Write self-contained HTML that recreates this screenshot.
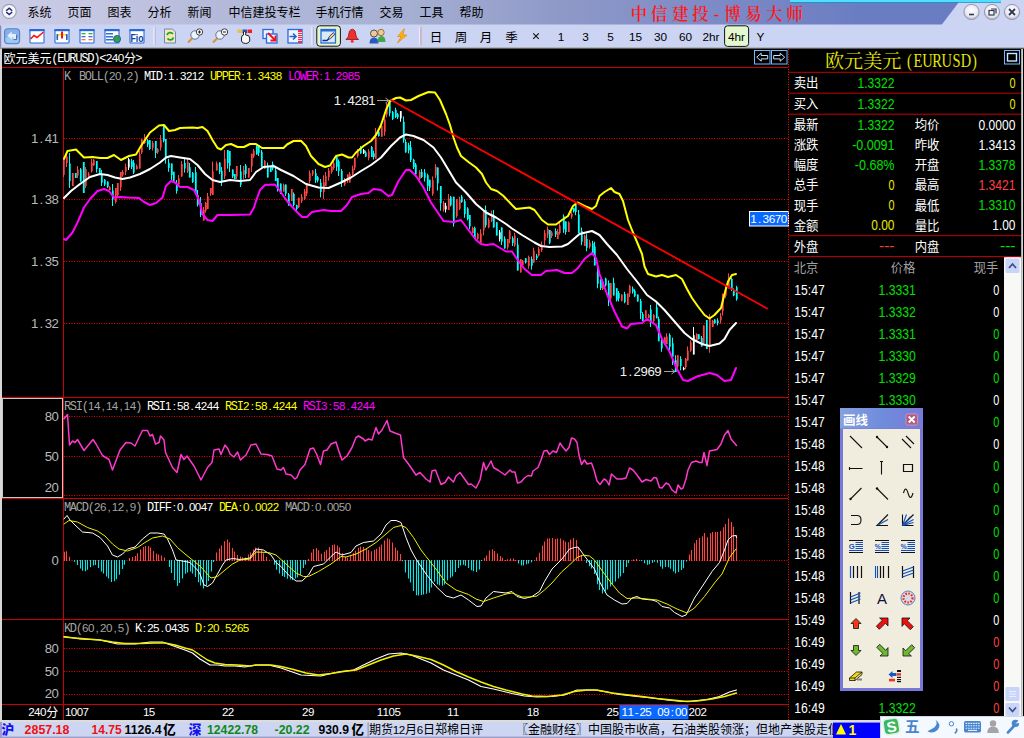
<!DOCTYPE html>
<html lang="zh-CN">
<head>
<meta charset="utf-8">
<title>中信建投-博易大师</title>
<style>
html,body{margin:0;padding:0;background:#000;overflow:hidden}
body{width:1024px;height:738px;font-family:"Liberation Sans","Noto Sans CJK SC",sans-serif}
svg{display:block}
text{white-space:pre}
</style>
</head>
<body>
<svg width="1024" height="738" viewBox="0 0 1024 738">
<defs>
<linearGradient id="gmenu" gradientUnits="userSpaceOnUse" x1="0" x2="1024" y1="0" y2="0"><stop offset="0" stop-color="#cccce6"/><stop offset="0.1" stop-color="#c4c6e2"/><stop offset="0.207" stop-color="#b5bada"/><stop offset="0.395" stop-color="#a6b0d2"/><stop offset="0.547" stop-color="#8f99c8"/><stop offset="0.7" stop-color="#7c8ac6"/><stop offset="0.84" stop-color="#6b7dc2"/><stop offset="1" stop-color="#6b7dc2"/></linearGradient>
<linearGradient id="gpal" x1="0" x2="1" y1="0" y2="0"><stop offset="0" stop-color="#86a0e0"/><stop offset="0.5" stop-color="#6f8cdc"/><stop offset="1" stop-color="#7a7ad8"/></linearGradient>
<radialGradient id="gbtn" cx="0.5" cy="0.4" r="0.6"><stop offset="0" stop-color="#ffffff"/><stop offset="0.7" stop-color="#e8e8f4"/><stop offset="1" stop-color="#a8a8b8"/></radialGradient>
</defs>
<rect x="0" y="0" width="1024" height="738" fill="#000" />
<g id="menubar">
<rect x="0" y="0" width="1024" height="25" fill="url(#gmenu)" />
<polygon points="960.5,0 1024,0 1024,25 941.5,25" fill="#ccd4f4"/>
<rect x="790" y="0" width="211" height="2" fill="#4fe0ff" />
<rect x="790" y="2" width="211" height="0.8" fill="#1890c8" />
<circle cx="9.2" cy="11.4" r="7" fill="#f6f6fc" stroke="#98a0b0" stroke-width="1.1"/>
<path d="M6.2 10.8 L9.2 8.2 L12.2 10.8 M6.2 12 L9.2 14.6 L12.2 12" fill="none" stroke="#202878" stroke-width="1.5"/>
<text x="27.5" y="17.2" font-family='"Liberation Sans","Noto Sans CJK SC",sans-serif' font-size="12.5" fill="#000" textLength="24" lengthAdjust="spacingAndGlyphs">系统</text>
<text x="67.5" y="17.2" font-family='"Liberation Sans","Noto Sans CJK SC",sans-serif' font-size="12.5" fill="#000" textLength="24" lengthAdjust="spacingAndGlyphs">页面</text>
<text x="107.5" y="17.2" font-family='"Liberation Sans","Noto Sans CJK SC",sans-serif' font-size="12.5" fill="#000" textLength="24" lengthAdjust="spacingAndGlyphs">图表</text>
<text x="147.5" y="17.2" font-family='"Liberation Sans","Noto Sans CJK SC",sans-serif' font-size="12.5" fill="#000" textLength="24" lengthAdjust="spacingAndGlyphs">分析</text>
<text x="187.5" y="17.2" font-family='"Liberation Sans","Noto Sans CJK SC",sans-serif' font-size="12.5" fill="#000" textLength="24" lengthAdjust="spacingAndGlyphs">新闻</text>
<text x="228.5" y="17.2" font-family='"Liberation Sans","Noto Sans CJK SC",sans-serif' font-size="12.5" fill="#000" textLength="72" lengthAdjust="spacingAndGlyphs">中信建投专栏</text>
<text x="315.5" y="17.2" font-family='"Liberation Sans","Noto Sans CJK SC",sans-serif' font-size="12.5" fill="#000" textLength="48" lengthAdjust="spacingAndGlyphs">手机行情</text>
<text x="379.5" y="17.2" font-family='"Liberation Sans","Noto Sans CJK SC",sans-serif' font-size="12.5" fill="#000" textLength="24" lengthAdjust="spacingAndGlyphs">交易</text>
<text x="419.5" y="17.2" font-family='"Liberation Sans","Noto Sans CJK SC",sans-serif' font-size="12.5" fill="#000" textLength="24" lengthAdjust="spacingAndGlyphs">工具</text>
<text x="459.5" y="17.2" font-family='"Liberation Sans","Noto Sans CJK SC",sans-serif' font-size="12.5" fill="#000" textLength="24" lengthAdjust="spacingAndGlyphs">帮助</text>
<text x="638.80 659.10 680.20 700.40 716.50 732.60 753.60 774.40 794.60" y="19.5" font-family='"Liberation Serif","Noto Serif CJK SC",serif' font-size="16.6" fill="#ff1818" text-anchor="middle" font-weight="600">中信建投-博易大师</text>
<circle cx="971.5" cy="12" r="7.6" fill="url(#gbtn)" stroke="#9898a8" stroke-width="1"/>
<line x1="969.0" y1="14.5" x2="974.0" y2="14.5" stroke="#303850" stroke-width="1.6" />
<circle cx="992" cy="12" r="7.6" fill="url(#gbtn)" stroke="#9898a8" stroke-width="1"/>
<rect x="989" y="10.5" width="5" height="4.5" fill="none" stroke="#303850" stroke-width="1.2"/>
<path d="M991 9 h5 v4.5" fill="none" stroke="#303850" stroke-width="1.2"/>
<circle cx="1012" cy="12" r="7.6" fill="url(#gbtn)" stroke="#9898a8" stroke-width="1"/>
<path d="M1009 9 l6 6 M1015 9 l-6 6" stroke="#303850" stroke-width="1.8" fill="none"/>
</g>
<g id="toolbar">
<rect x="0" y="24.5" width="1024" height="23.5" fill="#ccd4f4" />
<rect x="0" y="47" width="1024" height="1.5" fill="#b4b4bc" />
<rect x="0" y="25.5" width="1.2" height="22" fill="#8888b8" />
<rect x="4.6" y="28.8" width="15" height="15" rx="3.5" fill="#86b2e6" stroke="#5a80c8" stroke-width="1.1"/>
<rect x="5.6" y="37" width="13" height="5.8" rx="2.5" fill="#a8d0f4" opacity="0.8"/>
<path d="M7.2 35.6 l4.6 -4 v2.4 h4.8 v5.6 h-3 v-2.4 h-1.8 v2.4 z" fill="#e4ecff"/>
<path d="M13.6 39.6 h3 v-5" fill="none" stroke="#3858a0" stroke-width="0.9"/>
<rect x="30" y="29.5" width="14" height="13.5" rx="0.8" fill="#ffffff" stroke="#2a6ad8" stroke-width="1.1"/>
<rect x="29.5" y="29" width="15" height="2.2" fill="#2a6ad8" />
<polyline points="30.5,39 34,35.5 37,37.5 43.5,32" fill="none" stroke="#ff1010" stroke-width="1.6"/>
<rect x="55" y="29.5" width="14" height="13.5" rx="0.8" fill="#ffffff" stroke="#2a6ad8" stroke-width="1.1"/>
<rect x="54.5" y="29" width="15" height="2.2" fill="#2a6ad8" />
<path d="M56 38 q3 -5 6 -2.5 q3 -2.5 6 2.5" fill="none" stroke="#ffd000" stroke-width="1.3"/>
<rect x="61" y="31.5" width="2" height="7" fill="#ff1010" />
<rect x="56.5" y="34" width="1.6" height="6" fill="#2060d0" />
<rect x="66" y="34" width="1.6" height="6" fill="#2060d0" />
<rect x="80" y="29.5" width="14" height="13.5" rx="0.8" fill="#ffffff" stroke="#2a6ad8" stroke-width="1.1"/>
<rect x="79.5" y="29" width="15" height="2.2" fill="#2a6ad8" />
<rect x="81.5" y="33" width="4" height="1.3" fill="#30b030" />
<rect x="88.5" y="33" width="4" height="1.3" fill="#30b030" />
<rect x="81.5" y="36" width="4" height="1.3" fill="#3070e0" />
<rect x="88.5" y="36" width="4" height="1.3" fill="#3070e0" />
<rect x="81.5" y="39" width="4" height="1.3" fill="#ff7030" />
<rect x="88.5" y="39" width="4" height="1.3" fill="#ff7030" />
<rect x="105" y="29.5" width="14" height="13.5" rx="0.8" fill="#ffffff" stroke="#2a6ad8" stroke-width="1.1"/>
<rect x="104.5" y="29" width="15" height="2.2" fill="#2a6ad8" />
<rect x="106" y="33" width="7" height="1.5" fill="#3070d0" />
<rect x="106" y="36" width="7" height="1.5" fill="#3070d0" />
<rect x="106" y="39" width="7" height="1.5" fill="#3070d0" />
<circle cx="117" cy="39" r="3.6" fill="#30a050" stroke="#2050a0" stroke-width="0.8"/>
<rect x="130" y="29.5" width="14" height="13.5" rx="0.8" fill="#ffffff" stroke="#2a6ad8" stroke-width="1.1"/>
<rect x="129.5" y="29" width="15" height="2.2" fill="#2a6ad8" />
<text x="130.5" y="41.5" font-family='"Liberation Sans","Noto Sans CJK SC",sans-serif' font-size="11" fill="#1040a0" font-weight="bold" textLength="13" lengthAdjust="spacingAndGlyphs">Fio</text>
<rect x="153.5" y="27" width="1.2" height="18" fill="#f8f8ff" />
<rect x="154.7" y="27" width="0.8" height="18" fill="#a8a8c0" />
<path d="M164.5 29 h8 l3 3 v11 h-11 z" fill="#f4e8b0" stroke="#6888d0" stroke-width="1"/>
<path d="M167 35 a3.4 3.4 0 0 1 6 -1 M173.5 37.5 a3.4 3.4 0 0 1 -6 1" fill="none" stroke="#20a030" stroke-width="1.8"/>
<line x1="188" y1="42.5" x2="192.5" y2="38" stroke="#e09030" stroke-width="2.2"/>
<circle cx="195" cy="35" r="4.2" fill="#e8f4ff" stroke="#707080" stroke-width="1"/>
<circle cx="199.5" cy="32" r="3.2" fill="#f8f8f8" stroke="#303030" stroke-width="0.9"/>
<line x1="198" y1="32" x2="201" y2="32" stroke="#202020" stroke-width="1"/>
<line x1="199.5" y1="30.5" x2="199.5" y2="33.5" stroke="#202020" stroke-width="1"/>
<line x1="213" y1="42.5" x2="217.5" y2="38" stroke="#e09030" stroke-width="2.2"/>
<circle cx="220" cy="35" r="4.2" fill="#e8f4ff" stroke="#707080" stroke-width="1"/>
<circle cx="224.5" cy="32" r="3.2" fill="#f8f8f8" stroke="#303030" stroke-width="0.9"/>
<line x1="223" y1="32" x2="226" y2="32" stroke="#202020" stroke-width="1"/>
<rect x="237.5" y="29.5" width="4.5" height="3.5" fill="#e8c040" />
<rect x="242.5" y="29.5" width="4.5" height="3.5" fill="#2858c0" />
<rect x="247.5" y="29.5" width="4.5" height="3.5" fill="#f02020" />
<path d="M241.5 38 q0 -3 2 -3 v-3 q1.2 -1.2 2.2 0 v3 q4 0 4 3 v3 q-1 2.5 -4 2.5 q-3.6 0 -4.2 -2.5 z" fill="#f8f8f8" stroke="#202020" stroke-width="1"/>
<rect x="263" y="29.5" width="10" height="9" fill="#f0f4ff" stroke="#2a6ad8" stroke-width="1.3"/>
<rect x="266.5" y="34" width="10.5" height="9" fill="#f0f4ff" stroke="#2a6ad8" stroke-width="1.3"/>
<path d="M268 33 l7 7 M275.5 35.5 v5 h-5" stroke="#f01020" stroke-width="1.8" fill="none"/>
<rect x="288" y="29.5" width="14" height="13.5" fill="#f0f4ff" stroke="#2a6ad8" stroke-width="1.3"/>
<rect x="298" y="30" width="4" height="13" fill="#f03040" />
<rect x="298" y="32" width="4" height="0.9" fill="#f8f0f4" />
<rect x="298" y="34" width="4" height="0.9" fill="#f8f0f4" />
<rect x="298" y="36" width="4" height="0.9" fill="#f8f0f4" />
<rect x="298" y="38" width="4" height="0.9" fill="#f8f0f4" />
<rect x="298" y="40" width="4" height="0.9" fill="#f8f0f4" />
<path d="M289.5 36.5 h6 M293 33.5 l3 3 l-3 3" stroke="#2060d0" stroke-width="1.6" fill="none"/>
<rect x="311.5" y="27" width="1.2" height="18" fill="#f8f8ff" />
<rect x="312.7" y="27" width="0.8" height="18" fill="#a8a8c0" />
<rect x="316.8" y="25.8" width="23.6" height="20.4" rx="3" fill="#e4f8d0" stroke="#101010" stroke-width="1"/>
<rect x="321" y="29.5" width="14.5" height="13.5" fill="#d8ecf8" stroke="#2a6ad8" stroke-width="1.3"/>
<rect x="321" y="29.5" width="14.5" height="2" fill="#2a6ad8" />
<path d="M322.5 40.5 h4.5 l1.5 -1.5" stroke="#1020a0" stroke-width="1.3" fill="none"/>
<path d="M328 39.6 l1 -2.6 l4.2 -4.4 l1.7 1.6 l-4.3 4.4 z" fill="#ffd840" stroke="#1828a0" stroke-width="0.9"/>
<path d="M346 39.5 h12.5 l-2.2 -2.5 l-1.3 -6 q-2.7 -3.5 -5.5 0 l-1.3 6 z" fill="#f03030" stroke="#901010" stroke-width="0.8"/>
<circle cx="352.2" cy="41.3" r="1.5" fill="#f03030"/>
<circle cx="374" cy="33.5" r="3.5" fill="#f0c890" stroke="#303030" stroke-width="0.8"/>
<path d="M369.5 43.5 q0 -6 4.5 -6 q4.5 0 4.5 6 z" fill="#2858c0"/>
<circle cx="381" cy="32.5" r="3.2" fill="#f0c890" stroke="#806030" stroke-width="0.8"/>
<path d="M377.5 42 q0 -6 4 -6 q4 0 4 6 z" fill="#40a848"/>
<path d="M404.5 28.5 l-7 8 h3.5 l-3.5 6.5 l9.5 -8 h-4 z" fill="#ffb010" stroke="#e08000" stroke-width="0.6"/>
<rect x="419.3" y="27" width="1.2" height="18" fill="#f8f8ff" />
<rect x="420.5" y="27" width="0.8" height="18" fill="#c08080" />
<text x="436" y="41.6" font-family='"Liberation Sans","Noto Sans CJK SC",sans-serif' font-size="12.5" fill="#000" text-anchor="middle">日</text>
<text x="461" y="41.6" font-family='"Liberation Sans","Noto Sans CJK SC",sans-serif' font-size="12.5" fill="#000" text-anchor="middle">周</text>
<text x="486" y="41.6" font-family='"Liberation Sans","Noto Sans CJK SC",sans-serif' font-size="12.5" fill="#000" text-anchor="middle">月</text>
<text x="511.5" y="41.6" font-family='"Liberation Sans","Noto Sans CJK SC",sans-serif' font-size="12.5" fill="#000" text-anchor="middle">季</text>
<path d="M533.2 33.3 l5.6 5.6 M538.8 33.3 l-5.6 5.6" stroke="#101010" stroke-width="1.1" fill="none"/>
<rect x="724.6" y="25.8" width="24" height="20.6" rx="3" fill="#e4f8d0" stroke="#101010" stroke-width="1"/>
<text x="561" y="40.6" font-family='"Liberation Sans","Noto Sans CJK SC",sans-serif' font-size="11.8" fill="#000" text-anchor="middle">1</text>
<text x="585.5" y="40.6" font-family='"Liberation Sans","Noto Sans CJK SC",sans-serif' font-size="11.8" fill="#000" text-anchor="middle">3</text>
<text x="610.5" y="40.6" font-family='"Liberation Sans","Noto Sans CJK SC",sans-serif' font-size="11.8" fill="#000" text-anchor="middle">5</text>
<text x="635.5" y="40.6" font-family='"Liberation Sans","Noto Sans CJK SC",sans-serif' font-size="11.8" fill="#000" text-anchor="middle">15</text>
<text x="660.5" y="40.6" font-family='"Liberation Sans","Noto Sans CJK SC",sans-serif' font-size="11.8" fill="#000" text-anchor="middle">30</text>
<text x="685.5" y="40.6" font-family='"Liberation Sans","Noto Sans CJK SC",sans-serif' font-size="11.8" fill="#000" text-anchor="middle">60</text>
<text x="711" y="40.6" font-family='"Liberation Sans","Noto Sans CJK SC",sans-serif' font-size="11.8" fill="#000" text-anchor="middle">2hr</text>
<text x="736.5" y="40.6" font-family='"Liberation Sans","Noto Sans CJK SC",sans-serif' font-size="11.8" fill="#000" text-anchor="middle">4hr</text>
<text x="760.5" y="40.6" font-family='"Liberation Sans","Noto Sans CJK SC",sans-serif' font-size="11.8" fill="#000" text-anchor="middle">Y</text>
</g>
<g id="chart">
<rect x="0" y="48.5" width="2" height="672" fill="#d8d8d8" />
<text x="3.5" y="62.6" font-family='"Liberation Sans","Noto Sans CJK SC",sans-serif' font-size="12.5" fill="#fff" textLength="48" lengthAdjust="spacingAndGlyphs">欧元美元</text>
<text x="55.00 61.00 67.00 73.00 79.00 85.00 91.00 97.00 103.00 109.00 115.00 121.00" y="62.2" font-size="11.8" fill="#fff" text-anchor="middle"><tspan font-family='"Liberation Mono",monospace' font-size="12.15">(EURUSD)&lt;</tspan><tspan font-family='"Liberation Sans",sans-serif'>240</tspan></text>
<text x="124" y="62.6" font-family='"Liberation Sans","Noto Sans CJK SC",sans-serif' font-size="12.5" fill="#fff" textLength="12" lengthAdjust="spacingAndGlyphs">分</text>
<text x="139.00" y="62.2" font-size="11.8" fill="#fff" text-anchor="middle"><tspan font-family='"Liberation Mono",monospace' font-size="12.15">&gt;</tspan></text>
<rect x="754.5" y="50.5" width="15.5" height="13.5" fill="#000" stroke="#78b8ff" stroke-width="1"/>
<path d="M756.7 57.2 l4.5 -4 v2.3 h6.5 v3.4 h-6.5 v2.3 z" fill="#000" stroke="#c8e4ff" stroke-width="1"/>
<rect x="771.5" y="50.5" width="15.5" height="13.5" fill="#000" stroke="#78b8ff" stroke-width="1"/>
<path d="M784.7 57.2 l-4.5 -4 v2.3 h-6.5 v3.4 h6.5 v2.3 z" fill="#000" stroke="#c8e4ff" stroke-width="1"/>
<line x1="2" y1="67.5" x2="788" y2="67.5" stroke="#cc0000" stroke-width="1" />
<line x1="2" y1="397.5" x2="788" y2="397.5" stroke="#cc0000" stroke-width="1" />
<line x1="2" y1="498.5" x2="788" y2="498.5" stroke="#cc0000" stroke-width="1" />
<line x1="2" y1="619.5" x2="788" y2="619.5" stroke="#cc0000" stroke-width="1" />
<line x1="2" y1="704.5" x2="788" y2="704.5" stroke="#cc0000" stroke-width="1" />
<line x1="63.5" y1="67" x2="63.5" y2="720" stroke="#cc0000" stroke-width="1" />
<line x1="64" y1="138.5" x2="788" y2="138.5" stroke="#f00000" stroke-width="1" stroke-dasharray="1 1.5"/>
<line x1="64" y1="199.5" x2="788" y2="199.5" stroke="#f00000" stroke-width="1" stroke-dasharray="1 1.5"/>
<line x1="64" y1="261.5" x2="788" y2="261.5" stroke="#f00000" stroke-width="1" stroke-dasharray="1 1.5"/>
<line x1="64" y1="323.5" x2="788" y2="323.5" stroke="#f00000" stroke-width="1" stroke-dasharray="1 1.5"/>
<line x1="64" y1="416.5" x2="788" y2="416.5" stroke="#f00000" stroke-width="1" stroke-dasharray="1 1.5"/>
<line x1="64" y1="456.5" x2="788" y2="456.5" stroke="#f00000" stroke-width="1" stroke-dasharray="1 1.5"/>
<line x1="64" y1="495.5" x2="788" y2="495.5" stroke="#f00000" stroke-width="1" stroke-dasharray="1 1.5"/>
<line x1="64" y1="560.5" x2="788" y2="560.5" stroke="#f00000" stroke-width="1" stroke-dasharray="1 1.5"/>
<line x1="64" y1="648.5" x2="788" y2="648.5" stroke="#f00000" stroke-width="1" stroke-dasharray="1 1.5"/>
<line x1="64" y1="671.5" x2="788" y2="671.5" stroke="#f00000" stroke-width="1" stroke-dasharray="1 1.5"/>
<line x1="64" y1="694.5" x2="788" y2="694.5" stroke="#f00000" stroke-width="1" stroke-dasharray="1 1.5"/>
<rect x="2.5" y="398.5" width="60" height="99" fill="none" stroke="#c8c8c8" stroke-width="1"/>
<path d="M63.5 157.0V177.0M66.5 154.0V167.0M72.5 173.0V186.0M77.5 166.0V178.0M85.5 167.0V188.0M88.5 172.0V177.5M91.5 159.0V172.6M93.5 159.0V166.0M109.5 186.0V190.0M115.5 188.0V203.5M117.5 183.0V198.0M120.5 172.0V191.0M122.5 170.0V176.7M125.5 163.6V175.0M136.5 164.5V169.5M139.5 150.6V168.5M141.5 139.0V154.0M144.5 134.0V144.0M152.5 141.0V150.6M157.5 148.0V154.0M160.5 135.0V150.6M178.5 175.0V185.6M181.5 161.0V176.6M187.5 159.0V173.0M203.5 207.0V220.6M205.5 202.0V212.7M207.5 193.0V209.0M210.5 188.0V196.0M212.5 161.6V195.0M216.5 161.6V170.4M224.5 150.0V179.0M236.5 166.0V179.0M243.5 166.0V179.0M248.5 168.0V177.5M251.5 153.7V172.0M253.5 149.0V158.0M264.5 160.0V168.7M283.5 183.6V191.5M291.5 189.0V201.0M298.5 197.7V208.0M301.5 194.0V203.0M304.5 189.0V200.0M306.5 183.6V196.0M309.5 170.4V183.6M312.5 170.0V176.0M323.5 175.4V199.0M325.5 172.0V186.0M328.5 168.0V180.7M331.5 165.7V173.6M333.5 160.4V170.0M344.5 178.0V186.0M347.5 174.5V183.0M349.5 172.0V182.4M352.5 165.7V175.4M354.5 157.8V170.0M357.5 149.0V157.8M368.5 149.0V160.4M375.5 128.0V158.7M381.5 126.0V136.7M384.5 115.5V135.8M386.5 103.0V117.3M419.5 170.0V179.8M432.5 176.4V195.8M435.5 164.0V178.0M443.5 201.0V211.6M448.5 194.0V210.0M456.5 199.3V217.8M459.5 196.7V210.0M472.5 226.6V233.6M477.5 232.7V239.8M480.5 229.2V243.3M483.5 210.0V235.4M488.5 217.8V228.3M491.5 210.7V222.2M507.5 239.0V249.5M509.5 230.0V243.3M514.5 232.7V246.8M520.5 259.0V272.4M522.5 260.0V266.2M528.5 255.6V268.8M533.5 247.7V262.7M538.5 246.8V256.5M541.5 241.5V252.0M544.5 230.0V245.0M547.5 226.6V238.0M551.5 231.0V238.0M557.5 229.0V239.0M559.5 221.8V234.6M568.5 221.4V232.0M571.5 211.7V218.8M584.5 234.6V246.0M589.5 239.9V248.7M602.5 279.5V290.0M610.5 283.0V302.4M621.5 294.5V301.5M627.5 293.6V305.0M629.5 284.8V297.1M645.5 310.3V318.2M648.5 313.8V318.2M653.5 314.0V322.7M664.5 336.8V344.7M666.5 333.3V343.9M677.5 355.3V369.4M685.5 358.0V369.4M687.5 346.5V360.6M690.5 340.3V351.8M696.5 333.3V340.3M703.5 325.4V344.7M709.5 314.0V352.7M712.5 320.0V327.0M720.5 313.0V323.6M722.5 293.7V315.7M725.5 284.9V298.0M728.5 273.4V288.4" stroke="#ff4444" stroke-width="1" fill="none"/>
<path d="M63.8 159.0V175.0M66.8 156.6V163.1M72.8 173.0V186.0M77.8 169.6V175.6M85.8 169.1V185.9M88.8 173.7V175.8M91.8 163.1V171.2M93.8 159.7V165.3M109.8 187.2V190.0M115.8 188.0V201.9M117.8 183.0V195.0M120.8 172.0V187.2M122.8 172.0V174.7M125.8 167.0V171.6M136.8 166.0V169.0M139.8 154.2V168.5M141.8 139.0V152.5M144.8 137.0V143.0M152.8 142.9V147.7M157.8 149.2V152.2M160.8 139.7V147.5M178.8 178.2V184.5M181.8 164.1V176.6M187.8 161.8V171.6M203.8 209.7V220.6M205.8 203.1V210.6M207.8 196.2V209.0M210.8 188.0V193.6M212.8 171.6V195.0M216.8 163.4V170.4M224.8 158.7V176.1M236.8 166.0V176.4M243.8 169.9V175.1M248.8 168.0V177.5M251.8 153.7V166.5M253.8 150.8V156.2M264.8 160.9V168.7M283.8 185.2V191.5M291.8 189.0V201.0M298.8 197.7V207.0M301.8 196.7V201.2M304.8 191.2V198.9M306.8 183.6V193.5M309.8 173.0V181.0M312.8 170.6V174.2M323.8 182.5V191.9M325.8 176.2V186.0M328.8 170.5V176.9M331.8 166.5V172.0M333.8 163.3V168.1M344.8 179.6V184.4M347.8 174.5V180.4M349.8 174.1V182.4M352.8 168.6V174.4M354.8 157.8V167.6M357.8 151.6V156.0M368.8 151.3V158.1M375.8 137.2V158.7M381.8 126.0V136.7M384.8 119.6V131.7M386.8 107.3V114.4M419.8 172.0V178.8M432.8 180.3V193.9M435.8 166.8V175.2M443.8 203.1V209.5M448.8 198.8V210.0M456.8 199.3V216.0M459.8 199.4V208.7M472.8 228.0V232.9M477.8 234.1V239.1M480.8 233.4V243.3M483.8 210.0V230.3M488.8 219.9V227.2M491.8 214.1V221.0M507.8 239.0V247.4M509.8 231.3V239.3M514.8 235.5V245.4M520.8 259.0V272.4M522.8 260.6V265.0M528.8 256.9V266.2M533.8 250.7V262.7M538.8 248.7V255.5M541.8 244.7V249.9M544.8 233.0V240.5M547.8 228.9V234.6M551.8 232.4V235.9M557.8 232.0V239.0M559.8 225.6V233.3M568.8 222.5V232.0M571.8 213.8V216.7M584.8 235.7V246.0M589.8 242.5V246.9M602.8 281.6V288.9M610.8 283.0V298.5M621.8 294.5V300.8M627.8 293.6V305.0M629.8 286.0V293.4M645.8 310.3V318.2M648.8 315.1V318.2M653.8 314.9V321.0M664.8 337.6V344.7M666.8 336.5V343.9M677.8 355.3V366.6M685.8 359.1V367.1M687.8 350.7V360.6M690.8 342.6V350.7M696.8 334.0V340.3M703.8 325.4V342.8M709.8 317.9V345.0M712.8 320.7V327.0M720.8 316.2V320.4M722.8 293.7V311.3M725.8 286.2V295.4M728.8 277.9V288.4" stroke="#ff4444" stroke-width="1.8" fill="none"/>
<path d="M69.5 153.0V188.0M75.5 173.0V178.0M80.5 168.0V181.5M83.5 162.0V193.0M96.5 161.0V172.6M99.5 168.0V173.0M101.5 170.0V186.0M104.5 179.0V186.0M107.5 181.5V188.0M112.5 184.0V206.0M131.5 158.8V169.0M133.5 160.0V174.0M147.5 139.0V147.0M149.5 140.0V150.0M155.5 141.0V158.0M163.5 126.0V142.5M165.5 139.0V163.6M168.5 158.8V171.8M171.5 163.6V180.0M173.5 171.8V183.0M176.5 180.0V193.7M184.5 158.8V172.6M189.5 163.0V177.5M192.5 172.0V183.0M195.5 167.0V193.0M197.5 190.0V206.5M200.5 197.0V217.0M219.5 162.5V174.0M221.5 167.0V186.0M227.5 150.0V168.7M229.5 151.0V172.0M232.5 169.5V178.0M234.5 174.0V179.0M240.5 165.0V187.0M245.5 164.0V178.0M256.5 145.0V154.6M258.5 145.0V156.0M261.5 150.0V167.0M267.5 162.5V177.5M270.5 166.0V172.0M272.5 161.6V170.4M275.5 167.8V181.0M277.5 178.0V191.5M280.5 183.6V194.0M285.5 184.5V196.0M288.5 193.0V205.6M293.5 192.4V206.5M296.5 204.7V211.0M315.5 169.0V183.0M317.5 176.0V182.4M320.5 179.0V197.4M336.5 157.0V171.0M338.5 159.5V176.0M341.5 169.0V187.0M360.5 146.0V154.0M365.5 150.7V157.0M371.5 146.0V157.0M373.5 150.7V159.5M378.5 129.6V136.7M389.5 100.6V116.4M392.5 111.0V120.0M395.5 107.6V118.0M397.5 113.0V119.0M403.5 116.4V142.8M405.5 139.3V152.5M408.5 142.8V153.4M410.5 141.0V162.0M413.5 158.7V169.0M415.5 163.0V177.0M421.5 169.0V178.0M424.5 169.0V181.5M427.5 173.6V191.0M429.5 179.8V191.0M437.5 167.6V190.5M440.5 186.0V210.7M450.5 195.8V206.3M453.5 196.7V226.6M461.5 195.0V202.8M464.5 199.3V217.8M467.5 207.2V220.4M469.5 215.0V229.2M474.5 226.6V238.0M485.5 205.5V227.5M493.5 210.0V227.5M496.5 222.2V235.4M501.5 227.5V245.0M504.5 236.3V248.6M512.5 236.3V246.0M517.5 238.0V270.6M525.5 258.3V263.6M531.5 256.5V269.7M536.5 253.9V260.0M549.5 230.0V244.2M555.5 228.3V237.0M563.5 214.4V232.9M565.5 221.4V234.6M573.5 208.2V212.6M575.5 204.7V215.2M578.5 210.0V232.9M581.5 227.6V245.2M586.5 233.7V251.3M592.5 240.8V253.1M594.5 241.7V265.4M597.5 265.4V288.3M600.5 279.5V290.0M605.5 277.7V286.5M608.5 280.4V306.0M613.5 277.7V295.4M616.5 288.3V301.5M618.5 291.0V301.5M624.5 291.8V303.3M632.5 286.5V293.6M634.5 289.2V297.1M637.5 294.5V301.5M640.5 298.9V319.1M642.5 312.1V320.9M650.5 305.0V327.0M656.5 302.5V318.3M658.5 316.6V341.2M661.5 336.0V351.8M669.5 333.3V350.0M672.5 337.7V365.0M675.5 355.3V372.0M680.5 356.2V370.3M698.5 334.2V339.5M701.5 336.0V346.5M706.5 320.0V349.0M714.5 319.2V323.6M717.5 318.3V325.4M731.5 277.8V291.0M733.5 288.4V296.3M736.5 285.8V300.7" stroke="#00ffff" stroke-width="1" fill="none"/>
<path d="M69.8 163.5V181.0M75.8 173.0V178.0M80.8 169.3V181.5M83.8 162.0V193.0M96.8 161.0V169.1M99.8 168.0V173.0M101.8 174.8V182.8M104.8 179.7V184.6M107.8 181.5V186.7M112.8 190.6V199.4M131.8 160.8V167.0M133.8 162.8V172.6M147.8 140.6V144.6M149.8 140.0V149.0M155.8 141.0V152.9M163.8 126.0V140.8M165.8 139.0V158.7M168.8 162.7V167.9M171.8 163.6V175.1M173.8 171.8V180.8M176.8 184.1V191.0M184.8 162.9V168.5M189.8 167.3V177.5M192.8 173.1V181.9M195.8 172.2V193.0M197.8 194.9V204.8M200.8 203.0V215.0M219.8 162.5V171.7M221.8 170.8V182.2M227.8 150.0V163.1M229.8 151.0V165.7M232.8 169.5V176.3M234.8 174.0V179.0M240.8 171.6V184.8M245.8 165.4V173.8M256.8 145.0V154.6M258.8 145.0V152.7M261.8 151.7V167.0M267.8 165.5V177.5M270.8 166.0V172.0M272.8 164.2V168.6M275.8 170.4V181.0M277.8 178.0V190.2M280.8 183.6V194.0M285.8 184.5V193.7M288.8 194.3V205.6M293.8 193.8V205.1M296.8 205.3V209.1M315.8 173.2V180.2M317.8 177.3V180.5M320.8 182.7V191.9M336.8 157.0V166.8M338.8 161.2V171.1M341.8 170.8V181.6M360.8 148.4V153.2M365.8 152.6V156.4M371.8 147.1V157.0M373.8 153.3V156.9M378.8 131.7V136.0M389.8 102.2V113.2M392.8 111.9V119.1M395.8 109.7V117.0M397.8 114.2V117.2M403.8 121.7V140.2M405.8 141.9V152.5M408.8 144.9V150.2M410.8 147.3V159.9M413.8 159.7V166.9M415.8 164.4V174.2M421.8 171.7V177.1M424.8 172.8V177.8M427.8 175.3V185.8M429.8 179.8V187.6M437.8 167.6V183.6M440.8 186.0V203.3M450.8 196.9V205.2M453.8 196.7V223.6M461.8 196.6V202.0M464.8 201.2V214.1M467.8 208.5V219.1M469.8 215.0V226.4M474.8 227.7V238.0M485.8 209.9V225.3M493.8 215.2V227.5M496.8 222.2V235.4M501.8 227.5V241.5M504.8 238.8V248.6M512.8 238.2V243.1M517.8 244.5V270.6M525.8 258.3V262.5M531.8 259.1V265.7M536.8 255.7V258.2M549.8 230.0V242.8M555.8 230.9V234.4M563.8 216.2V229.2M565.8 221.4V232.0M573.8 208.2V211.3M575.8 204.7V212.0M578.8 214.6V232.9M581.8 231.1V241.7M586.8 239.0V247.8M592.8 243.3V253.1M594.8 246.4V265.4M597.8 272.3V283.7M600.8 279.5V287.9M605.8 278.6V285.6M608.8 283.0V300.9M613.8 283.0V295.4M616.8 288.3V300.2M618.8 293.1V298.4M624.8 294.1V302.2M632.8 288.6V291.5M634.8 290.8V296.3M637.8 294.5V301.5M640.8 300.9V313.0M642.8 313.9V320.9M650.8 309.4V322.6M656.8 307.2V318.3M658.8 319.1V341.2M661.8 340.7V348.6M669.8 335.0V346.7M672.8 343.2V356.8M675.8 360.3V372.0M680.8 359.0V366.1M698.8 334.2V339.0M701.8 338.1V346.5M706.8 320.0V349.0M714.8 319.6V323.2M717.8 320.4V323.3M731.8 279.1V289.7M733.8 290.8V295.5M736.8 287.3V299.2" stroke="#00ffff" stroke-width="1.8" fill="none"/>
<path d="M128.5 158.0V170.0M363.5 149.0V154.0M400.5 111.0V121.7M445.5 202.8V212.5M499.5 230.0V241.5M683.5 366.8V370.3M693.5 327.0V354.4" stroke="#ffffff" stroke-width="1" fill="none"/>
<path d="M128.8 159.2V167.6M363.8 150.0V153.0M400.8 111.0V118.5M445.8 205.7V209.6M499.8 232.3V239.2M683.8 367.9V369.6M693.8 335.2V354.4" stroke="#ffffff" stroke-width="1.8" fill="none"/>
<polyline points="64.0,239.0 66.0,240.0 72.5,232.5 77.5,222.5 84.0,207.5 90.0,199.0 97.5,191.0 104.0,189.0 109.0,191.0 114.0,197.5 120.0,197.0 127.5,197.5 139.0,198.0 144.0,202.0 150.0,205.0 156.0,203.0 162.5,197.5 166.0,186.0 171.0,181.0 175.0,182.5 180.0,187.0 187.5,187.0 194.0,190.0 199.0,200.0 202.5,214.0 207.5,220.0 212.5,221.0 217.5,215.0 230.0,215.0 250.0,214.5 254.0,207.5 256.0,201.0 260.0,190.0 265.0,185.0 275.0,184.5 280.0,191.0 287.0,201.0 296.0,211.0 302.0,217.0 307.0,217.0 312.0,212.0 323.5,210.0 331.0,211.0 341.0,211.0 347.0,205.0 352.0,197.0 361.0,194.0 368.5,193.0 373.5,189.0 381.0,190.0 388.5,196.0 392.0,195.0 398.5,181.0 406.0,170.0 410.0,170.0 416.0,176.0 423.5,187.5 431.0,202.5 443.5,221.0 453.5,222.0 461.0,220.0 468.5,230.0 476.0,240.0 481.0,244.0 486.0,245.0 493.5,244.0 506.0,251.5 512.0,251.5 517.0,259.0 524.5,269.0 532.0,275.0 541.0,275.0 546.0,271.0 557.0,270.0 564.5,273.0 572.0,273.0 578.0,268.0 584.5,259.0 592.0,253.0 596.0,258.0 599.5,274.0 607.0,294.0 614.5,311.5 622.0,326.5 627.0,328.5 631.0,324.0 642.0,323.0 647.0,319.0 656.0,325.0 662.0,339.0 669.5,351.5 677.0,369.0 683.0,380.0 688.0,381.0 697.0,376.5 709.5,373.0 717.0,375.0 724.5,381.0 731.0,380.0 736.0,368.0" fill="none" stroke="#ff00ff" stroke-width="2" stroke-linejoin="round" stroke-linecap="round" />
<polyline points="64.0,158.8 67.5,151.0 76.0,149.5 84.0,157.5 92.5,157.0 100.0,158.0 107.5,158.0 114.0,155.0 121.0,160.0 129.0,156.0 136.0,154.5 141.0,146.0 150.0,132.5 159.0,125.5 164.0,125.0 169.0,131.0 175.0,130.0 180.0,128.0 192.5,127.5 197.5,128.0 202.5,127.0 207.5,131.0 212.5,140.0 217.5,148.0 221.0,149.5 226.0,145.0 231.0,144.0 237.5,147.0 244.0,147.0 250.0,144.0 256.0,144.0 262.0,148.0 283.5,148.0 287.0,144.5 293.5,141.0 301.0,140.8 306.0,146.0 311.0,156.0 318.5,164.0 325.0,167.0 330.0,165.5 336.0,156.0 342.0,154.5 348.5,157.5 352.0,157.5 356.0,152.5 363.5,146.0 371.0,141.0 376.0,135.0 381.0,125.0 386.0,110.0 390.0,101.0 396.0,98.0 400.0,97.5 406.0,100.5 411.0,100.0 418.5,96.0 428.5,92.0 435.0,92.5 440.0,100.0 446.0,114.0 450.0,125.0 453.5,137.5 457.0,147.5 461.0,156.0 468.5,162.0 476.0,167.5 482.0,174.0 486.0,182.5 491.0,189.0 497.0,191.0 503.5,196.0 512.0,205.0 516.0,209.0 529.5,207.5 534.5,210.0 542.0,220.0 548.0,224.5 556.0,224.5 562.0,220.0 568.0,216.0 573.0,206.0 577.5,202.5 584.5,206.0 592.0,209.0 596.0,206.0 599.5,196.0 604.5,192.0 611.0,188.0 614.5,192.0 619.5,194.0 623.0,201.0 628.0,220.0 632.0,230.0 637.0,242.0 642.0,254.0 644.5,266.5 648.0,274.0 656.0,276.5 662.0,275.0 668.0,277.0 676.0,275.0 682.0,279.0 687.0,289.0 692.0,298.0 698.0,306.5 704.5,315.0 709.5,318.5 714.5,315.0 721.0,308.0 724.5,294.0 728.0,281.5 732.0,275.0 736.0,274.0" fill="none" stroke="#ffff00" stroke-width="2" stroke-linejoin="round" stroke-linecap="round" />
<polyline points="64.0,198.0 71.0,191.0 80.0,184.0 90.0,177.0 100.0,174.0 107.5,175.0 115.0,177.5 122.5,179.0 130.0,177.5 140.0,174.0 150.0,169.0 160.0,162.5 166.0,157.5 171.0,156.0 180.0,157.5 190.0,159.0 197.5,165.0 205.0,174.0 212.5,180.0 220.0,182.0 230.0,180.0 240.0,181.0 250.0,180.0 256.0,172.0 263.5,167.0 273.5,166.0 281.0,170.0 293.5,176.0 306.0,184.0 318.5,187.5 328.5,188.0 341.0,182.5 351.0,177.5 361.0,171.0 371.0,165.0 381.0,157.5 391.0,146.0 400.0,137.5 406.0,134.5 413.5,136.0 423.5,140.0 433.5,147.5 441.0,157.5 448.5,170.0 456.0,182.5 466.0,192.5 476.0,204.0 486.0,212.5 496.0,217.5 506.0,224.0 512.0,228.5 522.0,235.0 534.5,242.5 541.0,246.0 549.5,247.0 562.0,246.5 568.0,244.0 579.5,234.0 592.0,231.0 599.5,235.0 607.0,244.0 617.0,255.0 627.0,269.0 637.0,281.5 647.0,295.0 656.0,301.5 664.5,310.0 674.5,321.5 684.5,333.0 692.0,339.0 702.0,344.0 709.5,346.0 719.5,343.5 724.5,339.0 729.5,330.0 736.0,323.0" fill="none" stroke="#ffffff" stroke-width="2" stroke-linejoin="round" stroke-linecap="round" />
<polyline points="391.0,100.0 767.0,308.5" fill="none" stroke="#ff0000" stroke-width="1.8" stroke-linejoin="round" stroke-linecap="round" />
<text x="67.47" y="80.4" font-size="11.6" fill="#a4a4a4" text-anchor="middle"><tspan font-family='"Liberation Mono",monospace' font-size="11.95">K</tspan></text>
<text x="82.47 88.42 94.38 100.33 106.28 112.22 118.18 124.12 130.07 136.03" y="80.4" font-size="11.6" fill="#a4a4a4" text-anchor="middle"><tspan font-family='"Liberation Mono",monospace' font-size="11.95">BOLL(</tspan><tspan font-family='"Liberation Sans",sans-serif'>20,2</tspan><tspan font-family='"Liberation Mono",monospace' font-size="11.95">)</tspan></text>
<text x="147.47 153.43 159.38 165.32 171.28 177.22 183.18 189.12 195.07 201.03" y="80.4" font-size="11.6" fill="#fff" text-anchor="middle"><tspan font-family='"Liberation Mono",monospace' font-size="11.95">MID</tspan><tspan font-family='"Liberation Sans",sans-serif'>:1.3212</tspan></text>
<text x="213.47 219.43 225.38 231.32 237.28 243.22 249.18 255.12 261.07 267.02 272.98 278.93" y="80.4" font-size="11.6" fill="#ffff00" text-anchor="middle"><tspan font-family='"Liberation Mono",monospace' font-size="11.95">UPPER</tspan><tspan font-family='"Liberation Sans",sans-serif'>:1.3438</tspan></text>
<text x="291.48 297.43 303.38 309.32 315.27 321.23 327.18 333.12 339.07 345.02 350.98 356.93" y="80.4" font-size="11.6" fill="#ff00ff" text-anchor="middle"><tspan font-family='"Liberation Mono",monospace' font-size="11.95">LOWER</tspan><tspan font-family='"Liberation Sans",sans-serif'>:1.2985</tspan></text>
<text x="67.47 73.42 79.38 85.33 91.28 97.22 103.18 109.12 115.08 121.03 126.97 132.93 138.88" y="410.4" font-size="11.6" fill="#a4a4a4" text-anchor="middle"><tspan font-family='"Liberation Mono",monospace' font-size="11.95">RSI(</tspan><tspan font-family='"Liberation Sans",sans-serif'>14,14,14</tspan><tspan font-family='"Liberation Mono",monospace' font-size="11.95">)</tspan></text>
<text x="150.47 156.43 162.38 168.32 174.28 180.22 186.18 192.12 198.07 204.03 209.97 215.93" y="410.4" font-size="11.6" fill="#fff" text-anchor="middle"><tspan font-family='"Liberation Mono",monospace' font-size="11.95">RSI</tspan><tspan font-family='"Liberation Sans",sans-serif'>1:58.4244</tspan></text>
<text x="228.47 234.43 240.38 246.32 252.28 258.23 264.18 270.12 276.07 282.02 287.98 293.93" y="410.4" font-size="11.6" fill="#ffff00" text-anchor="middle"><tspan font-family='"Liberation Mono",monospace' font-size="11.95">RSI</tspan><tspan font-family='"Liberation Sans",sans-serif'>2:58.4244</tspan></text>
<text x="306.48 312.43 318.38 324.32 330.27 336.23 342.18 348.12 354.07 360.02 365.98 371.93" y="410.4" font-size="11.6" fill="#ff00ff" text-anchor="middle"><tspan font-family='"Liberation Mono",monospace' font-size="11.95">RSI</tspan><tspan font-family='"Liberation Sans",sans-serif'>3:58.4244</tspan></text>
<text x="67.47 73.42 79.38 85.33 91.28 97.22 103.18 109.12 115.08 121.03 126.97 132.93 138.88" y="511.2" font-size="11.6" fill="#a4a4a4" text-anchor="middle"><tspan font-family='"Liberation Mono",monospace' font-size="11.95">MACD(</tspan><tspan font-family='"Liberation Sans",sans-serif'>26,12,9</tspan><tspan font-family='"Liberation Mono",monospace' font-size="11.95">)</tspan></text>
<text x="150.47 156.43 162.38 168.32 174.28 180.22 186.18 192.12 198.07 204.03 209.97" y="511.2" font-size="11.6" fill="#fff" text-anchor="middle"><tspan font-family='"Liberation Mono",monospace' font-size="11.95">DIFF</tspan><tspan font-family='"Liberation Sans",sans-serif'>:0.0047</tspan></text>
<text x="222.47 228.43 234.38 240.32 246.28 252.22 258.18 264.12 270.07 276.02" y="511.2" font-size="11.6" fill="#ffff00" text-anchor="middle"><tspan font-family='"Liberation Mono",monospace' font-size="11.95">DEA</tspan><tspan font-family='"Liberation Sans",sans-serif'>:0.0022</tspan></text>
<text x="288.48 294.43 300.38 306.32 312.27 318.23 324.18 330.12 336.07 342.02 347.98" y="511.2" font-size="11.6" fill="#a4a4a4" text-anchor="middle"><tspan font-family='"Liberation Mono",monospace' font-size="11.95">MACD</tspan><tspan font-family='"Liberation Sans",sans-serif'>:0.0050</tspan></text>
<text x="67.47 73.42 79.38 85.33 91.28 97.22 103.18 109.12 115.08 121.03 126.97" y="632.4" font-size="11.6" fill="#a4a4a4" text-anchor="middle"><tspan font-family='"Liberation Mono",monospace' font-size="11.95">KD(</tspan><tspan font-family='"Liberation Sans",sans-serif'>60,20,5</tspan><tspan font-family='"Liberation Mono",monospace' font-size="11.95">)</tspan></text>
<text x="138.47 144.43 150.38 156.32 162.28 168.22 174.18 180.12 186.07" y="632.4" font-size="11.6" fill="#fff" text-anchor="middle"><tspan font-family='"Liberation Mono",monospace' font-size="11.95">K</tspan><tspan font-family='"Liberation Sans",sans-serif'>:25.0435</tspan></text>
<text x="198.47 204.43 210.38 216.32 222.28 228.22 234.18 240.12 246.07" y="632.4" font-size="11.6" fill="#ffff00" text-anchor="middle"><tspan font-family='"Liberation Mono",monospace' font-size="11.95">D</tspan><tspan font-family='"Liberation Sans",sans-serif'>:20.5265</tspan></text>
<text x="34.55 41.45 48.35 55.25" y="143.1" font-size="13.2" fill="#b8b8b8" text-anchor="middle"><tspan font-family='"Liberation Sans",sans-serif'>1.41</tspan></text>
<text x="34.55 41.45 48.35 55.25" y="203.8" font-size="13.2" fill="#b8b8b8" text-anchor="middle"><tspan font-family='"Liberation Sans",sans-serif'>1.38</tspan></text>
<text x="34.55 41.45 48.35 55.25" y="266" font-size="13.2" fill="#b8b8b8" text-anchor="middle"><tspan font-family='"Liberation Sans",sans-serif'>1.35</tspan></text>
<text x="34.55 41.45 48.35 55.25" y="328" font-size="13.2" fill="#b8b8b8" text-anchor="middle"><tspan font-family='"Liberation Sans",sans-serif'>1.32</tspan></text>
<text x="48.35 55.25" y="421" font-size="13.2" fill="#b8b8b8" text-anchor="middle"><tspan font-family='"Liberation Sans",sans-serif'>80</tspan></text>
<text x="48.35 55.25" y="461" font-size="13.2" fill="#b8b8b8" text-anchor="middle"><tspan font-family='"Liberation Sans",sans-serif'>50</tspan></text>
<text x="48.35 55.25" y="492.3" font-size="13.2" fill="#b8b8b8" text-anchor="middle"><tspan font-family='"Liberation Sans",sans-serif'>20</tspan></text>
<text x="55.25" y="565.3" font-size="13.2" fill="#b8b8b8" text-anchor="middle"><tspan font-family='"Liberation Sans",sans-serif'>0</tspan></text>
<text x="48.35 55.25" y="653" font-size="13.2" fill="#b8b8b8" text-anchor="middle"><tspan font-family='"Liberation Sans",sans-serif'>80</tspan></text>
<text x="48.35 55.25" y="676" font-size="13.2" fill="#b8b8b8" text-anchor="middle"><tspan font-family='"Liberation Sans",sans-serif'>50</tspan></text>
<text x="48.35 55.25" y="698" font-size="13.2" fill="#b8b8b8" text-anchor="middle"><tspan font-family='"Liberation Sans",sans-serif'>20</tspan></text>
<text x="337.45 344.35 351.25 358.15 365.05 371.95" y="105" font-size="13.2" fill="#f0f0f0" text-anchor="middle"><tspan font-family='"Liberation Sans",sans-serif'>1.4281</tspan></text>
<path d="M377 100.5 h12 M385.5 98 l3.5 2.5 l-3.5 2.5" stroke="#a0a0a0" stroke-width="1" fill="none"/>
<text x="623.45 630.35 637.25 644.15 651.05 657.95" y="376.2" font-size="13.2" fill="#f0f0f0" text-anchor="middle"><tspan font-family='"Liberation Sans",sans-serif'>1.2969</tspan></text>
<path d="M664 371.5 h11 M671.5 369 l3.5 2.5 l-3.5 2.5" stroke="#a0a0a0" stroke-width="1" fill="none"/>
<rect x="749.5" y="211.5" width="39" height="14.5" fill="#0868ff" stroke="#ffffff" stroke-width="1"/>
<text x="753.65 759.75 765.85 771.95 778.05 784.15" y="223.2" font-size="11.8" fill="#fff" text-anchor="middle"><tspan font-family='"Liberation Sans",sans-serif'>1.3670</tspan></text>
<polyline points="64.0,418.8 67.5,414.5 69.5,445.0 72.5,441.0 75.0,442.5 77.5,439.5 84.0,450.5 93.0,439.5 96.0,444.0 102.5,455.5 109.0,459.5 112.5,470.0 120.0,450.0 126.0,442.5 131.0,443.0 135.0,446.0 139.0,437.5 142.5,430.5 147.5,430.5 150.0,436.0 152.5,434.5 155.5,444.0 159.0,442.5 160.5,436.0 164.0,440.0 165.5,452.5 172.5,467.5 177.0,472.5 181.0,454.5 184.0,459.5 187.0,456.0 194.0,466.0 201.0,480.0 207.5,467.5 212.0,462.5 214.0,450.0 219.0,449.0 221.0,454.5 225.0,445.0 228.0,449.0 230.0,454.0 234.0,457.0 237.5,452.0 240.5,460.0 246.0,455.0 251.0,445.0 256.0,444.0 261.0,454.0 267.0,454.5 272.0,456.0 277.0,469.0 281.0,470.0 283.5,467.5 286.0,474.0 291.0,475.0 295.0,479.0 297.0,477.5 300.0,470.0 305.0,464.5 310.0,449.0 313.5,448.0 317.0,455.0 320.5,464.5 323.5,451.0 327.0,450.0 331.0,444.0 336.0,442.0 338.5,450.0 342.0,460.0 347.0,456.0 352.0,447.5 356.0,437.5 358.5,436.0 363.5,439.0 365.0,441.0 368.5,439.0 372.0,440.0 376.0,427.5 378.5,434.0 382.0,430.0 387.0,420.5 390.0,431.0 395.0,433.0 400.5,435.0 403.5,457.5 408.5,464.0 416.0,475.0 420.0,472.5 426.0,479.0 430.0,482.0 432.0,471.0 435.5,470.0 441.0,484.5 445.0,482.5 448.5,477.0 453.5,482.0 456.0,476.0 460.0,472.5 468.5,484.5 471.0,484.0 476.0,488.0 480.0,480.0 483.5,462.5 486.0,470.0 491.0,461.0 493.5,467.5 498.5,470.5 505.0,475.0 510.0,470.0 512.0,472.0 515.0,472.0 517.5,483.0 521.0,482.0 524.5,478.0 528.0,475.5 531.5,476.0 533.0,471.0 538.0,467.5 541.0,460.0 544.0,451.0 547.0,450.5 549.5,454.5 553.0,451.0 556.5,452.5 560.0,443.0 562.0,446.0 566.0,451.0 569.0,447.5 571.5,438.0 574.5,439.0 577.0,442.5 579.0,455.0 581.5,464.5 584.5,460.0 587.0,464.0 591.5,463.0 594.0,470.0 597.0,481.0 600.0,484.5 604.0,479.0 606.5,480.5 609.0,485.0 611.5,474.0 617.0,479.0 622.0,479.0 626.0,478.0 629.5,468.0 633.0,470.0 637.0,475.0 642.0,482.0 646.0,479.5 651.0,481.0 654.0,477.5 656.5,478.0 659.5,487.5 662.0,488.0 666.0,483.0 669.0,484.5 672.0,490.0 676.0,493.0 678.0,485.0 681.0,489.0 683.0,488.0 686.0,479.0 688.0,470.0 691.5,462.5 696.0,461.0 699.5,462.5 702.0,462.5 704.0,452.5 707.0,465.5 709.5,451.0 717.0,449.5 721.0,444.0 724.5,435.0 728.0,430.5 731.0,439.0 736.5,445.5" fill="none" stroke="#ff38cc" stroke-width="1.5" stroke-linejoin="round" stroke-linecap="round" />
<path d="M64.50 561V551.8M66.50 561V551.2M69.50 561V556.8M129.50 561V557.9M132.50 561V557.1M135.50 561V555.9M137.50 561V553.2M140.50 561V549.6M143.50 561V546.9M145.50 561V545.9M148.50 561V545.9M150.50 561V547.6M153.50 561V551.1M156.50 561V553.6M158.50 561V554.4M161.50 561V555.6M164.50 561V557.4M216.50 561V552.4M219.50 561V548.6M221.50 561V545.6M224.50 561V541.2M227.50 561V539.5M229.50 561V542.3M232.50 561V548.0M234.50 561V551.4M237.50 561V554.9M240.50 561V556.6M242.50 561V557.2M245.50 561V557.5M248.50 561V554.5M250.50 561V552.5M253.50 561V549.5M255.50 561V547.5M258.50 561V547.6M261.50 561V550.2M263.50 561V553.2M266.50 561V557.1M269.50 561V559.8M308.50 561V559.0M311.50 561V552.4M313.50 561V549.0M316.50 561V548.1M318.50 561V550.2M321.50 561V553.7M324.50 561V551.8M326.50 561V550.0M329.50 561V547.1M332.50 561V544.9M334.50 561V544.4M337.50 561V545.5M339.50 561V547.5M342.50 561V553.0M345.50 561V556.7M347.50 561V557.7M350.50 561V555.9M353.50 561V553.1M355.50 561V550.6M358.50 561V547.8M360.50 561V546.6M363.50 561V547.0M366.50 561V548.7M368.50 561V549.9M371.50 561V551.2M374.50 561V549.8M376.50 561V548.7M379.50 561V546.8M381.50 561V544.4M384.50 561V540.5M387.50 561V538.2M389.50 561V539.2M392.50 561V542.4M395.50 561V547.4M397.50 561V550.6M400.50 561V554.0M484.50 561V557.9M486.50 561V555.6M489.50 561V550.6M492.50 561V549.2M494.50 561V550.9M497.50 561V553.4M500.50 561V556.1M502.50 561V557.8M505.50 561V559.9M507.50 561V559.3M510.50 561V558.4M513.50 561V558.5M515.50 561V560.0M534.50 561V559.9M536.50 561V557.3M539.50 561V552.8M542.50 561V545.8M544.50 561V541.5M547.50 561V538.5M549.50 561V538.2M552.50 561V538.1M555.50 561V538.9M557.50 561V538.6M560.50 561V538.4M563.50 561V540.2M565.50 561V541.8M568.50 561V542.3M570.50 561V539.4M573.50 561V538.0M576.50 561V540.0M578.50 561V547.2M581.50 561V555.0M631.50 561V560.4M633.50 561V559.6M636.50 561V559.1M639.50 561V559.9M689.50 561V554.6M691.50 561V550.0M694.50 561V543.2M696.50 561V540.0M699.50 561V538.0M702.50 561V536.2M704.50 561V533.0M707.50 561V537.2M710.50 561V533.2M712.50 561V532.0M715.50 561V532.0M717.50 561V532.0M720.50 561V531.0M723.50 561V527.2M725.50 561V523.9M728.50 561V518.6M731.50 561V522.0M733.50 561V526.8M736.50 561V535.0" stroke="#ff4444" stroke-width="1.1" fill="none"/>
<path d="M74.50 560V561.8M77.50 560V564.9M80.50 560V568.4M82.50 560V570.8M85.50 560V571.3M87.50 560V569.7M90.50 560V567.2M93.50 560V565.6M95.50 560V565.1M98.50 560V567.9M101.50 560V571.4M103.50 560V573.5M106.50 560V576.5M108.50 560V578.6M111.50 560V581.9M114.50 560V581.3M116.50 560V579.2M119.50 560V574.8M122.50 560V569.0M124.50 560V564.8M169.50 560V567.0M171.50 560V573.0M174.50 560V580.0M177.50 560V586.0M179.50 560V583.1M182.50 560V578.4M185.50 560V573.7M187.50 560V572.5M190.50 560V571.5M192.50 560V573.5M195.50 560V576.9M198.50 560V582.3M200.50 560V585.5M203.50 560V588.5M206.50 560V585.4M208.50 560V581.1M211.50 560V571.5M213.50 560V562.0M274.50 560V564.8M276.50 560V569.8M279.50 560V573.5M282.50 560V575.9M284.50 560V577.0M287.50 560V578.7M290.50 560V579.5M292.50 560V579.9M295.50 560V578.6M297.50 560V577.4M300.50 560V574.8M303.50 560V568.1M305.50 560V564.6M402.50 560V561.3M405.50 560V572.4M408.50 560V578.4M410.50 560V582.4M413.50 560V591.0M416.50 560V595.3M418.50 560V595.6M421.50 560V594.9M423.50 560V594.5M426.50 560V593.8M429.50 560V592.7M431.50 560V587.6M434.50 560V581.8M437.50 560V584.2M439.50 560V585.2M442.50 560V585.8M444.50 560V584.6M447.50 560V580.4M450.50 560V577.8M452.50 560V576.6M455.50 560V572.0M458.50 560V567.9M460.50 560V565.5M463.50 560V564.8M465.50 560V565.8M468.50 560V568.0M471.50 560V570.2M473.50 560V571.2M476.50 560V572.1M479.50 560V569.4M481.50 560V561.0M518.50 560V563.4M521.50 560V565.6M523.50 560V565.4M526.50 560V564.2M528.50 560V563.4M531.50 560V562.2M586.50 560V563.0M589.50 560V566.2M591.50 560V568.4M594.50 560V574.0M597.50 560V584.3M599.50 560V590.0M602.50 560V593.4M605.50 560V591.5M607.50 560V589.5M610.50 560V586.5M612.50 560V584.5M615.50 560V581.5M618.50 560V578.5M620.50 560V576.5M623.50 560V573.0M626.50 560V567.0M628.50 560V563.0M641.50 560V561.0M644.50 560V563.2M647.50 560V564.8M649.50 560V564.2M652.50 560V562.8M654.50 560V561.8M657.50 560V562.7M660.50 560V566.6M662.50 560V568.7M665.50 560V566.9M668.50 560V567.2M670.50 560V568.8M673.50 560V571.5M675.50 560V573.5M678.50 560V571.9M681.50 560V569.9M683.50 560V568.2M686.50 560V561.5" stroke="#00e8e8" stroke-width="1.1" fill="none"/>
<polyline points="64.0,519.0 67.0,515.5 70.0,520.0 75.0,525.0 82.5,532.0 92.5,533.0 100.0,537.5 107.5,546.0 112.5,555.0 117.5,557.0 122.5,554.0 127.5,549.0 135.0,547.0 142.5,539.0 150.0,533.0 157.5,533.0 164.0,534.0 167.5,539.0 172.5,550.0 176.0,560.0 182.5,561.0 190.0,562.5 197.5,570.0 200.0,574.0 204.0,585.0 207.5,586.5 212.5,583.0 217.5,574.0 222.5,565.0 226.0,560.0 232.5,558.5 240.0,559.5 250.0,558.0 256.0,549.0 263.5,550.0 271.0,555.0 276.0,562.5 281.0,566.5 288.5,575.0 296.0,581.0 302.0,581.0 308.5,575.0 313.5,566.5 323.5,564.0 331.0,556.5 336.0,552.0 342.0,555.0 351.0,552.5 356.0,546.0 363.5,542.5 373.5,541.0 381.0,534.0 386.0,525.0 391.0,520.5 396.0,520.5 401.0,522.5 406.0,537.5 411.0,550.0 416.0,559.0 426.0,574.0 436.0,586.5 446.0,596.0 453.5,598.0 461.0,595.0 468.5,600.0 477.0,606.5 481.0,606.0 486.0,598.0 493.5,591.5 506.0,593.0 512.0,591.5 517.0,596.5 524.5,598.5 532.0,596.5 539.5,591.5 544.5,581.5 552.0,569.0 562.0,559.0 569.5,549.0 574.5,547.5 578.0,547.0 581.0,551.0 584.5,556.0 594.5,569.0 599.5,581.5 607.0,595.0 614.5,600.0 622.0,604.0 627.0,603.5 632.0,598.0 637.0,596.5 642.0,599.0 652.0,600.0 657.0,601.5 662.0,606.5 669.5,608.0 674.5,612.5 682.0,616.5 686.0,615.0 689.5,608.0 694.5,598.0 704.5,583.0 712.0,571.5 719.5,562.5 724.5,550.0 728.0,540.0 732.0,536.0 736.0,535.5 736.5,537.5" fill="none" stroke="#ffffff" stroke-width="1" stroke-linejoin="round" stroke-linecap="round" />
<polyline points="64.0,524.0 69.0,520.5 77.5,522.0 87.5,527.5 97.5,531.0 105.0,536.0 112.5,544.0 119.0,549.0 127.5,551.0 137.5,547.5 145.0,542.5 152.5,538.0 162.5,536.0 170.0,539.0 177.5,547.5 185.0,554.0 192.5,560.0 200.0,566.0 205.0,571.5 211.0,578.0 217.5,576.5 225.0,570.0 232.5,564.0 240.0,560.0 250.0,559.0 256.0,552.0 268.5,552.5 276.0,555.0 286.0,564.0 296.0,573.0 303.5,576.5 308.5,576.5 318.5,571.5 331.0,564.0 341.0,556.5 346.0,557.0 356.0,554.0 366.0,549.0 376.0,542.5 386.0,534.0 393.5,527.5 401.0,525.5 406.0,527.5 413.5,537.5 421.0,550.0 426.0,556.5 436.0,569.0 446.0,583.0 456.0,590.0 468.5,594.5 476.0,599.0 483.5,601.5 493.5,598.0 506.0,594.0 512.0,593.0 522.0,597.0 529.5,597.0 537.0,596.0 544.5,590.0 552.0,583.0 562.0,571.5 569.5,565.0 577.0,557.5 583.0,555.0 589.5,556.0 594.5,560.0 604.5,574.0 612.0,584.0 619.5,593.0 627.0,598.5 637.0,598.0 647.0,599.0 657.0,600.0 667.0,604.0 677.0,609.0 687.0,613.0 694.5,608.0 704.5,596.5 714.5,583.0 722.0,574.0 729.5,557.5 736.0,549.0" fill="none" stroke="#f0f000" stroke-width="1" stroke-linejoin="round" stroke-linecap="round" />
<polyline points="64.0,636.5 80.0,639.0 100.0,640.0 117.5,644.0 135.0,644.0 150.0,642.0 162.5,642.0 175.0,646.5 185.0,650.0 192.5,653.0 200.0,659.0 210.0,665.0 217.5,665.0 225.0,666.0 235.0,666.0 245.0,667.0 256.0,665.0 268.5,665.0 281.0,668.0 291.0,671.5 301.0,675.0 321.0,676.0 331.0,673.5 341.0,671.5 353.5,670.0 363.5,665.0 376.0,659.0 388.5,654.0 401.0,653.0 411.0,655.0 421.0,659.0 431.0,663.0 443.5,670.0 456.0,675.0 468.5,680.0 481.0,686.5 493.5,689.0 506.0,692.0 512.0,693.5 524.5,696.0 537.0,697.0 552.0,696.5 564.5,695.0 577.0,690.0 594.5,690.0 607.0,692.0 619.5,694.5 637.0,696.5 652.0,698.0 667.0,700.0 682.0,701.5 692.0,701.0 707.0,699.5 719.5,696.5 729.5,692.0 736.5,690.0" fill="none" stroke="#ffffff" stroke-width="1.2" stroke-linejoin="round" stroke-linecap="round" />
<polyline points="64.0,637.0 75.0,638.0 87.5,639.0 100.0,640.0 112.5,642.0 125.0,643.5 140.0,643.5 155.0,643.0 165.0,643.0 175.0,645.0 185.0,648.0 192.5,650.0 200.0,655.0 207.5,660.0 215.0,663.0 225.0,664.5 237.5,665.0 250.0,666.0 256.0,665.0 271.0,665.0 281.0,666.5 293.5,669.5 306.0,673.0 318.5,675.0 331.0,673.5 343.5,671.5 356.0,670.0 368.5,665.0 381.0,660.0 393.5,656.0 406.0,654.0 418.5,656.5 431.0,659.5 443.5,665.0 456.0,671.5 468.5,677.0 481.0,682.0 493.5,686.5 506.0,690.0 512.0,691.5 522.0,694.0 532.0,696.0 547.0,696.5 562.0,695.0 574.5,691.5 587.0,690.0 597.0,690.0 612.0,693.0 624.5,694.5 642.0,696.5 657.0,698.5 672.0,700.0 687.0,701.5 697.0,701.0 712.0,699.0 724.5,696.5 736.5,693.0" fill="none" stroke="#f0f000" stroke-width="1.5" stroke-linejoin="round" stroke-linecap="round" />
<text x="46.3" y="716.6" font-family='"Liberation Sans","Noto Sans CJK SC",sans-serif' font-size="12.5" fill="#fff" textLength="12" lengthAdjust="spacingAndGlyphs">分</text>
<text x="31.38 37.33 43.27" y="716.2" font-size="11.6" fill="#fff" text-anchor="middle"><tspan font-family='"Liberation Sans",sans-serif'>240</tspan></text>
<text x="68.15 74.05 79.95 85.85" y="716.2" font-size="11.6" fill="#fff" text-anchor="middle"><tspan font-family='"Liberation Sans",sans-serif'>1007</tspan></text>
<text x="146.15 152.05" y="716.2" font-size="11.6" fill="#fff" text-anchor="middle"><tspan font-family='"Liberation Sans",sans-serif'>15</tspan></text>
<text x="225.15 231.05" y="716.2" font-size="11.6" fill="#fff" text-anchor="middle"><tspan font-family='"Liberation Sans",sans-serif'>22</tspan></text>
<text x="305.25 311.15" y="716.2" font-size="11.6" fill="#fff" text-anchor="middle"><tspan font-family='"Liberation Sans",sans-serif'>29</tspan></text>
<text x="379.95 385.85 391.75 397.65" y="716.2" font-size="11.6" fill="#fff" text-anchor="middle"><tspan font-family='"Liberation Sans",sans-serif'>1105</tspan></text>
<text x="450.15 456.05" y="716.2" font-size="11.6" fill="#fff" text-anchor="middle"><tspan font-family='"Liberation Sans",sans-serif'>11</tspan></text>
<text x="530.05 535.95" y="716.2" font-size="11.6" fill="#fff" text-anchor="middle"><tspan font-family='"Liberation Sans",sans-serif'>18</tspan></text>
<text x="609.75 615.65" y="716.2" font-size="11.6" fill="#fff" text-anchor="middle"><tspan font-family='"Liberation Sans",sans-serif'>25</tspan></text>
<text x="691.85 697.75 703.65" y="716.2" font-size="11.6" fill="#fff" text-anchor="middle"><tspan font-family='"Liberation Sans",sans-serif'>202</tspan></text>
<rect x="619.4" y="705" width="69" height="14.4" fill="#0868ff" />
<text x="624.77 630.72 636.67 642.62 648.57" y="716.2" font-size="11.6" fill="#fff" text-anchor="middle"><tspan font-family='"Liberation Sans",sans-serif'>11-25</tspan></text>
<text x="660.47 666.42 672.38 678.32 684.27" y="716.2" font-size="11.6" fill="#fff" text-anchor="middle"><tspan font-family='"Liberation Sans",sans-serif'>09:00</tspan></text>
</g>
<g id="quote">
<line x1="788.5" y1="49" x2="788.5" y2="720" stroke="#ff1010" stroke-width="1" stroke-dasharray="1 1.5"/>
<rect x="1021.2" y="49" width="1.8" height="671" fill="#d4d4d4" />
<text x="825" y="68" font-family='"Liberation Serif","Noto Serif CJK SC",serif' font-size="19" fill="#e8e800" textLength="76.4" lengthAdjust="spacingAndGlyphs">欧元美元</text>
<text x="1196.58 1207.66 1220.36 1233.06 1245.76 1258.45 1271.15 1281.97" y="67" font-family='"Liberation Serif","Noto Serif CJK SC",serif' font-size="19" fill="#e8e800" text-anchor="middle" transform="scale(0.76,1)">(EURUSD)</text>
<rect x="1004.5" y="50.5" width="15" height="13.5" fill="#000" stroke="#78b8ff" stroke-width="1"/>
<rect x="1007.5" y="53.5" width="9" height="7.5" fill="#000" stroke="#c8e4ff" stroke-width="1.4"/>
<line x1="789" y1="72.3" x2="1021" y2="72.3" stroke="#c80000" stroke-width="1" />
<line x1="789" y1="93.2" x2="1021" y2="93.2" stroke="#c80000" stroke-width="1" />
<line x1="789" y1="114.2" x2="1021" y2="114.2" stroke="#c80000" stroke-width="1" />
<line x1="789" y1="235.7" x2="1021" y2="235.7" stroke="#c80000" stroke-width="1" />
<line x1="789" y1="256.6" x2="1021" y2="256.6" stroke="#c80000" stroke-width="1" />
<text x="793.7" y="87.2" font-family='"Liberation Sans","Noto Sans CJK SC",sans-serif' font-size="12.6" fill="#fff" textLength="24.8" lengthAdjust="spacingAndGlyphs">卖出</text>
<text x="857.55" y="87.7" font-family='"Liberation Sans","Noto Sans CJK SC",sans-serif' font-size="14" fill="#00e000" textLength="36.95" lengthAdjust="spacingAndGlyphs">1.3322</text>
<text x="1009.45" y="87.7" font-family='"Liberation Sans","Noto Sans CJK SC",sans-serif' font-size="14" fill="#e8e800" textLength="6.05" lengthAdjust="spacingAndGlyphs">0</text>
<text x="793.7" y="108.2" font-family='"Liberation Sans","Noto Sans CJK SC",sans-serif' font-size="12.6" fill="#fff" textLength="24.8" lengthAdjust="spacingAndGlyphs">买入</text>
<text x="857.55" y="108.7" font-family='"Liberation Sans","Noto Sans CJK SC",sans-serif' font-size="14" fill="#00e000" textLength="36.95" lengthAdjust="spacingAndGlyphs">1.3322</text>
<text x="1009.45" y="108.7" font-family='"Liberation Sans","Noto Sans CJK SC",sans-serif' font-size="14" fill="#e8e800" textLength="6.05" lengthAdjust="spacingAndGlyphs">0</text>
<text x="793.7" y="129.0" font-family='"Liberation Sans","Noto Sans CJK SC",sans-serif' font-size="12.6" fill="#fff" textLength="24.8" lengthAdjust="spacingAndGlyphs">最新</text>
<text x="857.55" y="129.5" font-family='"Liberation Sans","Noto Sans CJK SC",sans-serif' font-size="14" fill="#00e000" textLength="36.95" lengthAdjust="spacingAndGlyphs">1.3322</text>
<text x="914.7" y="129.0" font-family='"Liberation Sans","Noto Sans CJK SC",sans-serif' font-size="12.6" fill="#fff" textLength="24.8" lengthAdjust="spacingAndGlyphs">均价</text>
<text x="978.55" y="129.5" font-family='"Liberation Sans","Noto Sans CJK SC",sans-serif' font-size="14" fill="#ffffff" textLength="36.95" lengthAdjust="spacingAndGlyphs">0.0000</text>
<text x="793.7" y="149.14999999999998" font-family='"Liberation Sans","Noto Sans CJK SC",sans-serif' font-size="12.6" fill="#fff" textLength="24.8" lengthAdjust="spacingAndGlyphs">涨跌</text>
<text x="852.15" y="149.64999999999998" font-family='"Liberation Sans","Noto Sans CJK SC",sans-serif' font-size="14" fill="#00e000" textLength="42.35" lengthAdjust="spacingAndGlyphs">-0.0091</text>
<text x="914.7" y="149.14999999999998" font-family='"Liberation Sans","Noto Sans CJK SC",sans-serif' font-size="12.6" fill="#fff" textLength="24.8" lengthAdjust="spacingAndGlyphs">昨收</text>
<text x="978.55" y="149.64999999999998" font-family='"Liberation Sans","Noto Sans CJK SC",sans-serif' font-size="14" fill="#ffffff" textLength="36.95" lengthAdjust="spacingAndGlyphs">1.3413</text>
<text x="793.7" y="169.29999999999998" font-family='"Liberation Sans","Noto Sans CJK SC",sans-serif' font-size="12.6" fill="#fff" textLength="24.8" lengthAdjust="spacingAndGlyphs">幅度</text>
<text x="854.85" y="169.79999999999998" font-family='"Liberation Sans","Noto Sans CJK SC",sans-serif' font-size="14" fill="#00e000" textLength="39.65" lengthAdjust="spacingAndGlyphs">-0.68%</text>
<text x="914.7" y="169.29999999999998" font-family='"Liberation Sans","Noto Sans CJK SC",sans-serif' font-size="12.6" fill="#fff" textLength="24.8" lengthAdjust="spacingAndGlyphs">开盘</text>
<text x="978.55" y="169.79999999999998" font-family='"Liberation Sans","Noto Sans CJK SC",sans-serif' font-size="14" fill="#00e000" textLength="36.95" lengthAdjust="spacingAndGlyphs">1.3378</text>
<text x="793.7" y="189.45" font-family='"Liberation Sans","Noto Sans CJK SC",sans-serif' font-size="12.6" fill="#fff" textLength="24.8" lengthAdjust="spacingAndGlyphs">总手</text>
<text x="888.45" y="189.95" font-family='"Liberation Sans","Noto Sans CJK SC",sans-serif' font-size="14" fill="#e8e800" textLength="6.05" lengthAdjust="spacingAndGlyphs">0</text>
<text x="914.7" y="189.45" font-family='"Liberation Sans","Noto Sans CJK SC",sans-serif' font-size="12.6" fill="#fff" textLength="24.8" lengthAdjust="spacingAndGlyphs">最高</text>
<text x="978.55" y="189.95" font-family='"Liberation Sans","Noto Sans CJK SC",sans-serif' font-size="14" fill="#ff4040" textLength="36.95" lengthAdjust="spacingAndGlyphs">1.3421</text>
<text x="793.7" y="209.59999999999997" font-family='"Liberation Sans","Noto Sans CJK SC",sans-serif' font-size="12.6" fill="#fff" textLength="24.8" lengthAdjust="spacingAndGlyphs">现手</text>
<text x="888.45" y="210.09999999999997" font-family='"Liberation Sans","Noto Sans CJK SC",sans-serif' font-size="14" fill="#e8e800" textLength="6.05" lengthAdjust="spacingAndGlyphs">0</text>
<text x="914.7" y="209.59999999999997" font-family='"Liberation Sans","Noto Sans CJK SC",sans-serif' font-size="12.6" fill="#fff" textLength="24.8" lengthAdjust="spacingAndGlyphs">最低</text>
<text x="978.55" y="210.09999999999997" font-family='"Liberation Sans","Noto Sans CJK SC",sans-serif' font-size="14" fill="#00e000" textLength="36.95" lengthAdjust="spacingAndGlyphs">1.3310</text>
<text x="793.7" y="229.75" font-family='"Liberation Sans","Noto Sans CJK SC",sans-serif' font-size="12.6" fill="#fff" textLength="24.8" lengthAdjust="spacingAndGlyphs">金额</text>
<text x="871.25" y="230.25" font-family='"Liberation Sans","Noto Sans CJK SC",sans-serif' font-size="14" fill="#e8e800" textLength="23.25" lengthAdjust="spacingAndGlyphs">0.00</text>
<text x="914.7" y="229.75" font-family='"Liberation Sans","Noto Sans CJK SC",sans-serif' font-size="12.6" fill="#fff" textLength="24.8" lengthAdjust="spacingAndGlyphs">量比</text>
<text x="992.25" y="230.25" font-family='"Liberation Sans","Noto Sans CJK SC",sans-serif' font-size="14" fill="#ffffff" textLength="23.25" lengthAdjust="spacingAndGlyphs">1.00</text>
<text x="793.7" y="250.7" font-family='"Liberation Sans","Noto Sans CJK SC",sans-serif' font-size="12.6" fill="#fff" textLength="24.8" lengthAdjust="spacingAndGlyphs">外盘</text>
<text x="879.1" y="251.2" font-family='"Liberation Sans","Noto Sans CJK SC",sans-serif' font-size="14" fill="#ff4040" textLength="15.4" lengthAdjust="spacingAndGlyphs">---</text>
<text x="914.7" y="250.7" font-family='"Liberation Sans","Noto Sans CJK SC",sans-serif' font-size="12.6" fill="#fff" textLength="24.8" lengthAdjust="spacingAndGlyphs">内盘</text>
<text x="1000.1" y="251.2" font-family='"Liberation Sans","Noto Sans CJK SC",sans-serif' font-size="14" fill="#00e000" textLength="15.4" lengthAdjust="spacingAndGlyphs">---</text>
<text x="793.7" y="272.0" font-family='"Liberation Sans","Noto Sans CJK SC",sans-serif' font-size="12.6" fill="#a0a0a0" textLength="24.8" lengthAdjust="spacingAndGlyphs">北京</text>
<text x="890.7" y="272.0" font-family='"Liberation Sans","Noto Sans CJK SC",sans-serif' font-size="12.6" fill="#a0a0a0" textLength="24.8" lengthAdjust="spacingAndGlyphs">价格</text>
<text x="973.7" y="272.0" font-family='"Liberation Sans","Noto Sans CJK SC",sans-serif' font-size="12.6" fill="#a0a0a0" textLength="24.8" lengthAdjust="spacingAndGlyphs">现手</text>
<text x="794.3" y="295.2" font-family='"Liberation Sans","Noto Sans CJK SC",sans-serif' font-size="14" fill="#fff" textLength="30.5" lengthAdjust="spacingAndGlyphs">15:47</text>
<text x="878.6" y="295.2" font-family='"Liberation Sans","Noto Sans CJK SC",sans-serif' font-size="14" fill="#00e000" textLength="37.2" lengthAdjust="spacingAndGlyphs">1.3331</text>
<text x="993.25" y="295.2" font-family='"Liberation Sans","Noto Sans CJK SC",sans-serif' font-size="14" fill="#ffffff" textLength="6.05" lengthAdjust="spacingAndGlyphs">0</text>
<text x="794.3" y="317.2" font-family='"Liberation Sans","Noto Sans CJK SC",sans-serif' font-size="14" fill="#fff" textLength="30.5" lengthAdjust="spacingAndGlyphs">15:47</text>
<text x="878.6" y="317.2" font-family='"Liberation Sans","Noto Sans CJK SC",sans-serif' font-size="14" fill="#00e000" textLength="37.2" lengthAdjust="spacingAndGlyphs">1.3332</text>
<text x="993.25" y="317.2" font-family='"Liberation Sans","Noto Sans CJK SC",sans-serif' font-size="14" fill="#ffffff" textLength="6.05" lengthAdjust="spacingAndGlyphs">0</text>
<text x="794.3" y="339.2" font-family='"Liberation Sans","Noto Sans CJK SC",sans-serif' font-size="14" fill="#fff" textLength="30.5" lengthAdjust="spacingAndGlyphs">15:47</text>
<text x="878.6" y="339.2" font-family='"Liberation Sans","Noto Sans CJK SC",sans-serif' font-size="14" fill="#00e000" textLength="37.2" lengthAdjust="spacingAndGlyphs">1.3331</text>
<text x="993.25" y="339.2" font-family='"Liberation Sans","Noto Sans CJK SC",sans-serif' font-size="14" fill="#00e000" textLength="6.05" lengthAdjust="spacingAndGlyphs">0</text>
<text x="794.3" y="361.2" font-family='"Liberation Sans","Noto Sans CJK SC",sans-serif' font-size="14" fill="#fff" textLength="30.5" lengthAdjust="spacingAndGlyphs">15:47</text>
<text x="878.6" y="361.2" font-family='"Liberation Sans","Noto Sans CJK SC",sans-serif' font-size="14" fill="#00e000" textLength="37.2" lengthAdjust="spacingAndGlyphs">1.3330</text>
<text x="993.25" y="361.2" font-family='"Liberation Sans","Noto Sans CJK SC",sans-serif' font-size="14" fill="#00e000" textLength="6.05" lengthAdjust="spacingAndGlyphs">0</text>
<text x="794.3" y="383.2" font-family='"Liberation Sans","Noto Sans CJK SC",sans-serif' font-size="14" fill="#fff" textLength="30.5" lengthAdjust="spacingAndGlyphs">15:47</text>
<text x="878.6" y="383.2" font-family='"Liberation Sans","Noto Sans CJK SC",sans-serif' font-size="14" fill="#00e000" textLength="37.2" lengthAdjust="spacingAndGlyphs">1.3329</text>
<text x="993.25" y="383.2" font-family='"Liberation Sans","Noto Sans CJK SC",sans-serif' font-size="14" fill="#00e000" textLength="6.05" lengthAdjust="spacingAndGlyphs">0</text>
<text x="794.3" y="405.2" font-family='"Liberation Sans","Noto Sans CJK SC",sans-serif' font-size="14" fill="#fff" textLength="30.5" lengthAdjust="spacingAndGlyphs">15:47</text>
<text x="878.6" y="405.2" font-family='"Liberation Sans","Noto Sans CJK SC",sans-serif' font-size="14" fill="#00e000" textLength="37.2" lengthAdjust="spacingAndGlyphs">1.3330</text>
<text x="993.25" y="405.2" font-family='"Liberation Sans","Noto Sans CJK SC",sans-serif' font-size="14" fill="#ffffff" textLength="6.05" lengthAdjust="spacingAndGlyphs">0</text>
<text x="794.3" y="427.2" font-family='"Liberation Sans","Noto Sans CJK SC",sans-serif' font-size="14" fill="#fff" textLength="30.5" lengthAdjust="spacingAndGlyphs">15:47</text>
<text x="993.25" y="427.2" font-family='"Liberation Sans","Noto Sans CJK SC",sans-serif' font-size="14" fill="#00e000" textLength="6.05" lengthAdjust="spacingAndGlyphs">0</text>
<text x="794.3" y="449.2" font-family='"Liberation Sans","Noto Sans CJK SC",sans-serif' font-size="14" fill="#fff" textLength="30.5" lengthAdjust="spacingAndGlyphs">15:48</text>
<text x="993.25" y="449.2" font-family='"Liberation Sans","Noto Sans CJK SC",sans-serif' font-size="14" fill="#ffffff" textLength="6.05" lengthAdjust="spacingAndGlyphs">0</text>
<text x="794.3" y="471.2" font-family='"Liberation Sans","Noto Sans CJK SC",sans-serif' font-size="14" fill="#fff" textLength="30.5" lengthAdjust="spacingAndGlyphs">15:48</text>
<text x="993.25" y="471.2" font-family='"Liberation Sans","Noto Sans CJK SC",sans-serif' font-size="14" fill="#00e000" textLength="6.05" lengthAdjust="spacingAndGlyphs">0</text>
<text x="794.3" y="493.2" font-family='"Liberation Sans","Noto Sans CJK SC",sans-serif' font-size="14" fill="#fff" textLength="30.5" lengthAdjust="spacingAndGlyphs">15:48</text>
<text x="993.25" y="493.2" font-family='"Liberation Sans","Noto Sans CJK SC",sans-serif' font-size="14" fill="#00e000" textLength="6.05" lengthAdjust="spacingAndGlyphs">0</text>
<text x="794.3" y="515.2" font-family='"Liberation Sans","Noto Sans CJK SC",sans-serif' font-size="14" fill="#fff" textLength="30.5" lengthAdjust="spacingAndGlyphs">15:48</text>
<text x="993.25" y="515.2" font-family='"Liberation Sans","Noto Sans CJK SC",sans-serif' font-size="14" fill="#00e000" textLength="6.05" lengthAdjust="spacingAndGlyphs">0</text>
<text x="794.3" y="537.2" font-family='"Liberation Sans","Noto Sans CJK SC",sans-serif' font-size="14" fill="#fff" textLength="30.5" lengthAdjust="spacingAndGlyphs">15:48</text>
<text x="993.25" y="537.2" font-family='"Liberation Sans","Noto Sans CJK SC",sans-serif' font-size="14" fill="#00e000" textLength="6.05" lengthAdjust="spacingAndGlyphs">0</text>
<text x="794.3" y="559.2" font-family='"Liberation Sans","Noto Sans CJK SC",sans-serif' font-size="14" fill="#fff" textLength="30.5" lengthAdjust="spacingAndGlyphs">15:48</text>
<text x="993.25" y="559.2" font-family='"Liberation Sans","Noto Sans CJK SC",sans-serif' font-size="14" fill="#00e000" textLength="6.05" lengthAdjust="spacingAndGlyphs">0</text>
<text x="794.3" y="581.2" font-family='"Liberation Sans","Noto Sans CJK SC",sans-serif' font-size="14" fill="#fff" textLength="30.5" lengthAdjust="spacingAndGlyphs">15:48</text>
<text x="993.25" y="581.2" font-family='"Liberation Sans","Noto Sans CJK SC",sans-serif' font-size="14" fill="#00e000" textLength="6.05" lengthAdjust="spacingAndGlyphs">0</text>
<text x="794.3" y="603.2" font-family='"Liberation Sans","Noto Sans CJK SC",sans-serif' font-size="14" fill="#fff" textLength="30.5" lengthAdjust="spacingAndGlyphs">15:48</text>
<text x="993.25" y="603.2" font-family='"Liberation Sans","Noto Sans CJK SC",sans-serif' font-size="14" fill="#00e000" textLength="6.05" lengthAdjust="spacingAndGlyphs">0</text>
<text x="794.3" y="625.2" font-family='"Liberation Sans","Noto Sans CJK SC",sans-serif' font-size="14" fill="#fff" textLength="30.5" lengthAdjust="spacingAndGlyphs">15:49</text>
<text x="993.25" y="625.2" font-family='"Liberation Sans","Noto Sans CJK SC",sans-serif' font-size="14" fill="#ffffff" textLength="6.05" lengthAdjust="spacingAndGlyphs">0</text>
<text x="794.3" y="647.2" font-family='"Liberation Sans","Noto Sans CJK SC",sans-serif' font-size="14" fill="#fff" textLength="30.5" lengthAdjust="spacingAndGlyphs">16:49</text>
<text x="993.25" y="647.2" font-family='"Liberation Sans","Noto Sans CJK SC",sans-serif' font-size="14" fill="#ff4040" textLength="6.05" lengthAdjust="spacingAndGlyphs">0</text>
<text x="794.3" y="669.2" font-family='"Liberation Sans","Noto Sans CJK SC",sans-serif' font-size="14" fill="#fff" textLength="30.5" lengthAdjust="spacingAndGlyphs">16:49</text>
<text x="993.25" y="669.2" font-family='"Liberation Sans","Noto Sans CJK SC",sans-serif' font-size="14" fill="#ff4040" textLength="6.05" lengthAdjust="spacingAndGlyphs">0</text>
<text x="794.3" y="691.2" font-family='"Liberation Sans","Noto Sans CJK SC",sans-serif' font-size="14" fill="#fff" textLength="30.5" lengthAdjust="spacingAndGlyphs">16:49</text>
<text x="993.25" y="691.2" font-family='"Liberation Sans","Noto Sans CJK SC",sans-serif' font-size="14" fill="#ff4040" textLength="6.05" lengthAdjust="spacingAndGlyphs">0</text>
<text x="794.3" y="713.2" font-family='"Liberation Sans","Noto Sans CJK SC",sans-serif' font-size="14" fill="#fff" textLength="30.5" lengthAdjust="spacingAndGlyphs">16:49</text>
<text x="878.6" y="713.2" font-family='"Liberation Sans","Noto Sans CJK SC",sans-serif' font-size="14" fill="#00e000" textLength="37.2" lengthAdjust="spacingAndGlyphs">1.3322</text>
<text x="993.25" y="713.2" font-family='"Liberation Sans","Noto Sans CJK SC",sans-serif' font-size="14" fill="#ff4040" textLength="6.05" lengthAdjust="spacingAndGlyphs">0</text>
<rect x="1004" y="257.2" width="17.2" height="460" fill="#f8f8f6" />
<rect x="1005" y="258" width="15" height="15.5" rx="2" fill="#c8d4f8" stroke="#f8f8ff" stroke-width="1"/>
<path d="M1009 268 l3.5 -4 l3.5 4" stroke="#405080" stroke-width="1.8" fill="none"/>
<rect x="1005" y="686.5" width="15" height="15" rx="2" fill="#c8d4f8" stroke="#f8f8ff" stroke-width="1"/>
<rect x="1009" y="691" width="7" height="1" fill="#e8f0ff" />
<rect x="1009" y="693.5" width="7" height="1" fill="#e8f0ff" />
<rect x="1009" y="696" width="7" height="1" fill="#e8f0ff" />
<rect x="1005" y="702.5" width="15" height="14" rx="2" fill="#c8d4f8" stroke="#f8f8ff" stroke-width="1"/>
<path d="M1009 707.5 l3.5 4 l3.5 -4" stroke="#405080" stroke-width="1.8" fill="none"/>
</g>
<g id="palette">
<rect x="840" y="408" width="83" height="283" fill="#7878d8" />
<rect x="840" y="408" width="83" height="20.5" fill="url(#gpal)" />
<rect x="843" y="429" width="77" height="259" fill="#f0ecde" />
<text x="843" y="424.8" font-family='"Liberation Sans","Noto Sans CJK SC",sans-serif' font-size="12.5" fill="#fff" font-weight="bold" textLength="25" lengthAdjust="spacingAndGlyphs">画线</text>
<rect x="906" y="414" width="11.5" height="11" rx="1.5" fill="#b05c80" stroke="#d8a0b8" stroke-width="0.8"/>
<path d="M908.7 416.5 l6 6 M914.7 416.5 l-6 6" stroke="#fff" stroke-width="1.8" fill="none"/>
<path d="M850 436 l12 12" stroke="#101010" stroke-width="1.1" fill="none"/>
<path d="M877 437 l10 10" stroke="#101010" stroke-width="1.1" fill="none"/>
<circle cx="877" cy="437" r="1.2" fill="#101010"/><circle cx="887" cy="447" r="1.2" fill="#101010"/>
<path d="M902 439 l9 9 M906 436 l8 8" stroke="#101010" stroke-width="1.1" fill="none"/>
<path d="M849.5 468.5 h13 M849.5 467 v3" stroke="#101010" stroke-width="1.1" fill="none"/>
<path d="M881.5 461.5 v13 M880 461.5 h3" stroke="#101010" stroke-width="1.1" fill="none"/>
<path d="M903.5 464.5 h9 v7 h-9 z" stroke="#101010" stroke-width="1.2" fill="none"/>
<path d="M850.5 499 l11 -11" stroke="#101010" stroke-width="1.1" fill="none"/>
<circle cx="850.5" cy="499" r="1.2" fill="#101010"/>
<path d="M877 488.5 l11 11" stroke="#101010" stroke-width="1.1" fill="none"/>
<circle cx="877" cy="488.5" r="1.2" fill="#101010"/>
<path d="M903.5 493 q2 -8 4.5 0 q2.5 9 5 0" stroke="#101010" stroke-width="1.1" fill="none"/>
<path d="M851 515.5 h6 q4 0 4 4.5 q0 4.5 -4 4.5 h-6" stroke="#101010" stroke-width="1.1" fill="none"/>
<path d="M888 514.5 l-11 11 h11" stroke="#101010" stroke-width="1.1" fill="none"/>
<path d="M878 525 l10 -5.5" stroke="#1050c0" stroke-width="1.1" fill="none"/>
<path d="M902.5 514.5 v11 h11 M902.5 525.5 l11 -11" stroke="#101010" stroke-width="1.1" fill="none"/>
<path d="M902.5 525.5 l4 -11 M902.5 525.5 l8 -9 M902.5 525.5 l11 -6 M902.5 525.5 l11 -3" stroke="#1050c0" stroke-width="1.1" fill="none"/>
<path d="M849 540.5 h14 M849 552.5 h14" stroke="#101010" stroke-width="1" fill="none"/>
<path d="M855.5 542.5 h7.5 M855.5 544.5 h7.5 M855.5 546.5 h7.5 M855.5 548.5 h7.5 M849 550.5 h14" stroke="#1050c0" stroke-width="1" fill="none"/>
<text x="848.7" y="549" font-family='"Liberation Sans","Noto Sans CJK SC",sans-serif' font-size="7.5" fill="#1050c0" font-weight="bold" textLength="6" lengthAdjust="spacingAndGlyphs">G</text>
<path d="M875 540.5 h14 M875 552.5 h14" stroke="#101010" stroke-width="1" fill="none"/>
<path d="M881.5 542.5 h7.5 M881.5 544.5 h7.5 M881.5 546.5 h7.5 M881.5 548.5 h7.5 M875 550.5 h14" stroke="#1050c0" stroke-width="1" fill="none"/>
<text x="874.7" y="549" font-family='"Liberation Sans","Noto Sans CJK SC",sans-serif' font-size="7.5" fill="#1050c0" font-weight="bold" textLength="6" lengthAdjust="spacingAndGlyphs">%</text>
<path d="M901 540.5 h14 M901 552.5 h14" stroke="#101010" stroke-width="1" fill="none"/>
<path d="M907.5 542.5 h7.5 M907.5 544.5 h7.5 M907.5 546.5 h7.5 M907.5 548.5 h7.5 M901 550.5 h14" stroke="#1050c0" stroke-width="1" fill="none"/>
<text x="900.7" y="549" font-family='"Liberation Sans","Noto Sans CJK SC",sans-serif' font-size="7.5" fill="#1050c0" font-weight="bold" textLength="6" lengthAdjust="spacingAndGlyphs">%</text>
<path d="M850.5 566 v12" stroke="#1050c0" stroke-width="1.2" fill="none"/>
<path d="M853.5 566 v12 M857.5 566 v12 M861.5 566 v12" stroke="#101010" stroke-width="1.2" fill="none"/>
<path d="M875.5 566 v12 M877.5 566 v12" stroke="#1050c0" stroke-width="1.1" fill="none"/>
<path d="M880.5 566 v12 M883.5 566 v12 M888.5 566 v12" stroke="#101010" stroke-width="1.2" fill="none"/>
<path d="M902.5 566 v12 M913.5 566 v12" stroke="#101010" stroke-width="1.2" fill="none"/>
<path d="M902.5 571 l11 -4 M902.5 574 l11 -4 M902.5 577 l11 -4" stroke="#1050c0" stroke-width="1.1" fill="none"/>
<path d="M850.5 592 v12 M859 592 v12" stroke="#101010" stroke-width="1.2" fill="none"/>
<path d="M850.5 597 l10 -4 M850.5 600 l10 -4 M850.5 603 l10 -4" stroke="#1050c0" stroke-width="1.1" fill="none"/>
<text x="882" y="603.5" font-family='"Liberation Sans","Noto Sans CJK SC",sans-serif' font-size="15" fill="#101040" text-anchor="middle">A</text>
<circle cx="908" cy="598" r="7" fill="#d8d8e0" stroke="#6080c0" stroke-width="1"/>
<circle cx="908" cy="598" r="4.5" fill="none" stroke="#f02020" stroke-width="2.2" stroke-dasharray="1.5 1.5"/>
<path d="M856 618.5 l5 5 h-2.5 v5 h-5 v-5 h-2.5 z" stroke="#101010" stroke-width="0.8" fill="#f03818"/>
<path d="M888 618 v8 l-2.7 -2.7 l-6 6 l-3 -3 l6 -6 l-2.7 -2.3 z" stroke="#101010" stroke-width="0.8" fill="#f01010"/>
<path d="M902 618 h8 l-2.7 2.7 l6 6 l-3 3 l-6 -6 l-2.3 2.7 z" stroke="#101010" stroke-width="0.8" fill="#f01010"/>
<path d="M856 655.5 l5 -5 h-2.5 v-5 h-5 v5 h-2.5 z" stroke="#101010" stroke-width="0.8" fill="#70b830"/>
<path d="M888 656 h-8 l2.7 -2.7 l-6 -6 l3 -3 l6 6 l2.3 -2.7 z" stroke="#101010" stroke-width="0.8" fill="#70b830"/>
<path d="M903 656 v-8 l2.7 2.7 l6 -6 l3 3 l-6 6 l2.7 2.3 z" stroke="#101010" stroke-width="0.8" fill="#70b830"/>
<path d="M849.5 678 l7 -6 h5.5 l-7 6 z M849.5 678 v2.5 h5.5 v-2.5 M855 680.5 l7 -6 v-2.5" stroke="#101010" stroke-width="0.8" fill="#f0d818"/>
<rect x="857" y="678.5" width="5" height="2" fill="#808080" />
<path d="M888.5 674.5 l4 -3.5 v2 h4 v3 h-4 v2 z" stroke="none" stroke-width="0" fill="#1858c0"/>
<rect x="897" y="670" width="4" height="2" fill="#101010" />
<rect x="897" y="673.2" width="4" height="2.4" fill="#f03020" />
<rect x="897" y="676.8" width="4" height="1.2" fill="#101010" />
<rect x="897" y="679" width="4" height="1.2" fill="#101010" />
<rect x="897" y="681" width="4" height="1.2" fill="#101010" />
<rect x="889" y="678.8" width="6" height="2.6" fill="#f03020" />
</g>
<g id="statusbar">
<rect x="0" y="720" width="1024" height="18" fill="#ccd6f2" />
<rect x="0" y="720" width="880" height="2.2" fill="#dcdcdc" />
<rect x="0" y="736.6" width="880" height="1.4" fill="#9c9cc8" />
<rect x="0" y="722" width="2" height="16" fill="#9c9cd0" />
<text x="1.6" y="734.3" font-family='"Liberation Sans","Noto Sans CJK SC",sans-serif' font-size="12.6" fill="#1010f0" font-weight="900" textLength="12.6" lengthAdjust="spacingAndGlyphs">沪</text>
<text x="24.6" y="733.9" font-family='"Liberation Sans","Noto Sans CJK SC",sans-serif' font-size="12.6" fill="#f01010" font-weight="bold" textLength="44.8" lengthAdjust="spacingAndGlyphs">2857.18</text>
<text x="91.6" y="733.9" font-family='"Liberation Sans","Noto Sans CJK SC",sans-serif' font-size="12.6" fill="#f01010" font-weight="bold" textLength="30.2" lengthAdjust="spacingAndGlyphs">14.75</text>
<text x="124.6" y="733.9" font-family='"Liberation Sans","Noto Sans CJK SC",sans-serif' font-size="12.6" fill="#000" font-weight="bold" textLength="37" lengthAdjust="spacingAndGlyphs">1126.4</text>
<text x="163.2" y="734.3" font-family='"Liberation Sans","Noto Sans CJK SC",sans-serif' font-size="12.6" fill="#000" font-weight="900" textLength="12.4" lengthAdjust="spacingAndGlyphs">亿</text>
<text x="188.8" y="734.3" font-family='"Liberation Sans","Noto Sans CJK SC",sans-serif' font-size="12.6" fill="#1010f0" font-weight="900" textLength="12.6" lengthAdjust="spacingAndGlyphs">深</text>
<text x="207" y="733.9" font-family='"Liberation Sans","Noto Sans CJK SC",sans-serif' font-size="12.6" fill="#108818" font-weight="bold" textLength="51" lengthAdjust="spacingAndGlyphs">12422.78</text>
<text x="274.6" y="733.9" font-family='"Liberation Sans","Noto Sans CJK SC",sans-serif' font-size="12.6" fill="#108818" font-weight="bold" textLength="35" lengthAdjust="spacingAndGlyphs">-20.22</text>
<text x="318.6" y="733.9" font-family='"Liberation Sans","Noto Sans CJK SC",sans-serif' font-size="12.6" fill="#000" font-weight="bold" textLength="30.4" lengthAdjust="spacingAndGlyphs">930.9</text>
<text x="351.4" y="734.3" font-family='"Liberation Sans","Noto Sans CJK SC",sans-serif' font-size="12.6" fill="#000" font-weight="900" textLength="12.4" lengthAdjust="spacingAndGlyphs">亿</text>
<rect x="367.6" y="722.5" width="1" height="15" fill="#8888b0" />
<text x="369" y="734.3" font-family='"Liberation Sans","Noto Sans CJK SC",sans-serif' font-size="12.5" fill="#000" textLength="24" lengthAdjust="spacingAndGlyphs">期货</text>
<text x="396.00 402.00" y="733.9" font-size="11.6" fill="#000" text-anchor="middle"><tspan font-family='"Liberation Sans",sans-serif'>12</tspan></text>
<text x="405" y="734.3" font-family='"Liberation Sans","Noto Sans CJK SC",sans-serif' font-size="12.5" fill="#000" textLength="12" lengthAdjust="spacingAndGlyphs">月</text>
<text x="420.00" y="733.9" font-size="11.6" fill="#000" text-anchor="middle"><tspan font-family='"Liberation Sans",sans-serif'>6</tspan></text>
<text x="423" y="734.3" font-family='"Liberation Sans","Noto Sans CJK SC",sans-serif' font-size="12.5" fill="#000" textLength="60" lengthAdjust="spacingAndGlyphs">日郑棉日评</text>
<text x="516" y="734.3" font-family='"Liberation Sans","Noto Sans CJK SC",sans-serif' font-size="12.5" fill="#000" textLength="324" lengthAdjust="spacingAndGlyphs">〖金融财经〗中国股市收高，石油类股领涨；但地产类股走低</text>
<rect x="833" y="722.6" width="47.2" height="15.4" fill="#0000ff" />
<path d="M836 734.5 l5 -10.5 l5 10.5 z" fill="#ffff00"/>
<text x="848.6" y="735" font-family='"Liberation Sans","Noto Sans CJK SC",sans-serif' font-size="14" fill="#ffff00" font-weight="bold">1</text>
<rect x="880" y="716" width="144" height="22" fill="#f4f8ff" />
<rect x="880" y="716" width="144" height="1" fill="#d0d8ec" />
<rect x="880" y="716" width="1" height="22" fill="#d0d8ec" />
<rect x="883.6" y="718.6" width="15.6" height="15.6" rx="4" fill="#38b860" stroke="#e0f0e0" stroke-width="1.6" transform="rotate(-9 891.4 726.4)"/>
<text x="886.6" y="732.2" font-family='"Liberation Sans","Noto Sans CJK SC",sans-serif' font-size="15" fill="#fff" font-weight="bold" transform="rotate(-9 891.4 726.4)">S</text>
<text x="905" y="732.4" font-family='"Liberation Sans","Noto Sans CJK SC",sans-serif' font-size="14.6" fill="#4a86cc" font-weight="bold" textLength="14.6" lengthAdjust="spacingAndGlyphs">五</text>
<path d="M935.4 719.6 q4.6 6.6 -8 11.6 q6 3 10.4 -1.4 q4.2 -5 -2.4 -10.2 z" fill="#4a86cc"/>
<circle cx="951.4" cy="723.8" r="2.2" fill="none" stroke="#4a86cc" stroke-width="1"/>
<path d="M956 728.6 q2.2 1.6 -1.2 4.8" fill="none" stroke="#4a86cc" stroke-width="1.7"/>
<rect x="964" y="721" width="17" height="11.4" rx="1.6" fill="#4a86cc"/>
<line x1="965.6" y1="723.4" x2="979.6" y2="723.4" stroke="#e8f0ff" stroke-width="1.1" stroke-dasharray="1.6 0.9"/>
<line x1="965.6" y1="725.8" x2="979.6" y2="725.8" stroke="#e8f0ff" stroke-width="1.1" stroke-dasharray="1.6 0.9"/>
<line x1="965.6" y1="728.2" x2="979.6" y2="728.2" stroke="#e8f0ff" stroke-width="1.1" stroke-dasharray="1.6 0.9"/>
<line x1="968" y1="730.4" x2="977" y2="730.4" stroke="#e8f0ff" stroke-width="1.1"/>
<circle cx="993" cy="723.4" r="3.2" fill="#a4a4a4"/><path d="M987.2 733 q0 -6.6 5.8 -6.6 q5.8 0 5.8 6.6 z" fill="#a4a4a4"/>
<path d="M1008 732.4 l6.4 -6.8" stroke="#4a86cc" stroke-width="2.8" stroke-linecap="round" fill="none"/><circle cx="1015.4" cy="723.4" r="3.7" fill="#4a86cc"/><path d="M1015.4 723.4 l4 -3.4 l1.4 3 z" fill="#f4f8ff"/>
</g>
</svg>
</body>
</html>
